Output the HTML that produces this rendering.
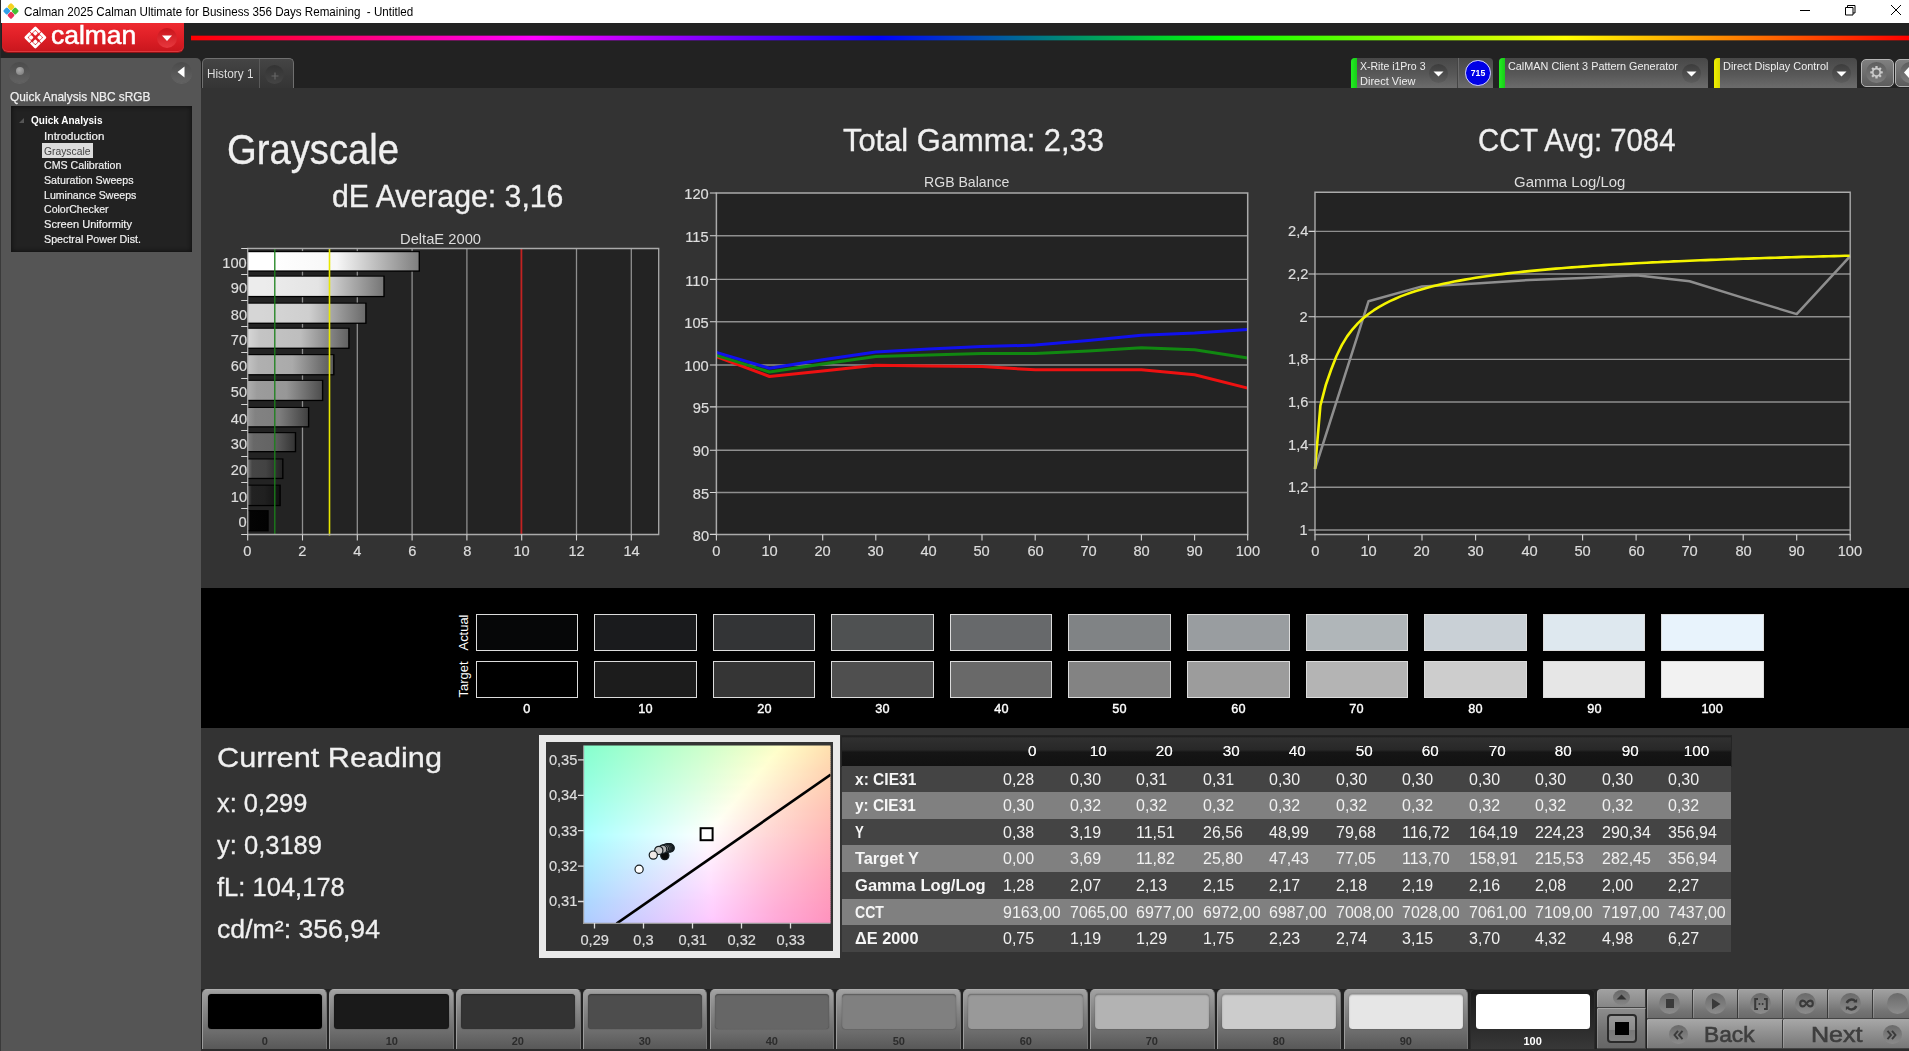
<!DOCTYPE html>
<html lang="en"><head><meta charset="utf-8"><title>Calman 2025 - Grayscale</title>
<style>
html,body{margin:0;padding:0;background:#222;}
body{width:1909px;height:1051px;overflow:hidden;position:relative;font-family:"Liberation Sans",sans-serif;}
#app{position:absolute;left:0;top:0;width:1909px;height:1051px;overflow:hidden;background:#222;}
.b{position:absolute;display:block;}
.t{position:absolute;display:block;white-space:nowrap;margin:0;padding:0;}
</style></head><body><div id="app">
<div class="b" style="left:201.00px;top:88.00px;width:1708.00px;height:901.00px;background:#333;"></div>
<span class="t" style="left:226.50px;top:123.24px;font-size:42.59px;line-height:52px;color:#f0f0f0;transform:scaleX(0.8972);transform-origin:left center;-webkit-text-stroke:0.35px #f0f0f0;">Grayscale</span>
<span class="t" style="left:331.50px;top:178.02px;font-size:31.10px;line-height:38px;color:#f0f0f0;transform:scaleX(0.9723);transform-origin:left center;-webkit-text-stroke:0.35px #f0f0f0;">dE Average: 3,16</span>
<span class="t" style="left:842.50px;top:122.12px;font-size:31.10px;line-height:38px;color:#f0f0f0;transform:scaleX(0.9932);transform-origin:left center;-webkit-text-stroke:0.35px #f0f0f0;">Total Gamma: 2,33</span>
<span class="t" style="left:1477.50px;top:122.12px;font-size:31.10px;line-height:38px;color:#f0f0f0;transform:scaleX(0.9413);transform-origin:left center;-webkit-text-stroke:0.35px #f0f0f0;">CCT Avg: 7084</span>
<span class="t" style="left:400.00px;top:228.76px;font-size:15.41px;line-height:19px;color:#ddd;transform:scaleX(0.9552);transform-origin:left center;">DeltaE 2000</span>
<span class="t" style="left:923.60px;top:172.16px;font-size:15.41px;line-height:19px;color:#ddd;transform:scaleX(0.9149);transform-origin:left center;">RGB Balance</span>
<span class="t" style="left:1513.60px;top:172.16px;font-size:15.41px;line-height:19px;color:#ddd;transform:scaleX(0.9707);transform-origin:left center;">Gamma Log/Log</span>
<svg class="b" style="left:0;top:0" width="1909" height="1051" viewBox="0 0 1909 1051"><defs><linearGradient id="bg0" x1="0" x2="1" y1="0" y2="0"><stop offset="0" stop-color="rgb(255,255,255)"/><stop offset="0.12" stop-color="rgb(255,255,255)"/><stop offset="0.52" stop-color="rgb(247,247,247)"/><stop offset="1" stop-color="rgb(127,127,127)"/></linearGradient><linearGradient id="bg1" x1="0" x2="1" y1="0" y2="0"><stop offset="0" stop-color="rgb(236,236,236)"/><stop offset="0.12" stop-color="rgb(236,236,236)"/><stop offset="0.52" stop-color="rgb(228,228,228)"/><stop offset="1" stop-color="rgb(118,118,118)"/></linearGradient><linearGradient id="bg2" x1="0" x2="1" y1="0" y2="0"><stop offset="0" stop-color="rgb(214,214,214)"/><stop offset="0.12" stop-color="rgb(214,214,214)"/><stop offset="0.52" stop-color="rgb(207,207,207)"/><stop offset="1" stop-color="rgb(107,107,107)"/></linearGradient><linearGradient id="bg3" x1="0" x2="1" y1="0" y2="0"><stop offset="0" stop-color="rgb(214,214,214)"/><stop offset="0.12" stop-color="rgb(196,196,196)"/><stop offset="0.52" stop-color="rgb(190,190,190)"/><stop offset="1" stop-color="rgb(98,98,98)"/></linearGradient><linearGradient id="bg4" x1="0" x2="1" y1="0" y2="0"><stop offset="0" stop-color="rgb(194,194,194)"/><stop offset="0.12" stop-color="rgb(176,176,176)"/><stop offset="0.52" stop-color="rgb(170,170,170)"/><stop offset="1" stop-color="rgb(88,88,88)"/></linearGradient><linearGradient id="bg5" x1="0" x2="1" y1="0" y2="0"><stop offset="0" stop-color="rgb(174,174,174)"/><stop offset="0.12" stop-color="rgb(156,156,156)"/><stop offset="0.52" stop-color="rgb(151,151,151)"/><stop offset="1" stop-color="rgb(78,78,78)"/></linearGradient><linearGradient id="bg6" x1="0" x2="1" y1="0" y2="0"><stop offset="0" stop-color="rgb(148,148,148)"/><stop offset="0.12" stop-color="rgb(130,130,130)"/><stop offset="0.52" stop-color="rgb(126,126,126)"/><stop offset="1" stop-color="rgb(65,65,65)"/></linearGradient><linearGradient id="bg7" x1="0" x2="1" y1="0" y2="0"><stop offset="0" stop-color="rgb(122,122,122)"/><stop offset="0.12" stop-color="rgb(104,104,104)"/><stop offset="0.52" stop-color="rgb(100,100,100)"/><stop offset="1" stop-color="rgb(52,52,52)"/></linearGradient><linearGradient id="bg8" x1="0" x2="1" y1="0" y2="0"><stop offset="0" stop-color="rgb(110,110,110)"/><stop offset="0.12" stop-color="rgb(70,70,70)"/><stop offset="0.52" stop-color="rgb(67,67,67)"/><stop offset="1" stop-color="rgb(35,35,35)"/></linearGradient><linearGradient id="bg9" x1="0" x2="1" y1="0" y2="0"><stop offset="0" stop-color="rgb(74,74,74)"/><stop offset="0.12" stop-color="rgb(34,34,34)"/><stop offset="0.52" stop-color="rgb(32,32,32)"/><stop offset="1" stop-color="rgb(17,17,17)"/></linearGradient><linearGradient id="bg10" x1="0" x2="1" y1="0" y2="0"><stop offset="0" stop-color="rgb(44,44,44)"/><stop offset="0.12" stop-color="rgb(4,4,4)"/><stop offset="0.52" stop-color="rgb(3,3,3)"/><stop offset="1" stop-color="rgb(2,2,2)"/></linearGradient></defs><rect x="247.7" y="248.5" width="411.0" height="286.0" fill="#232323"/><path d="M302.5 248.5V534.5M357.3 248.5V534.5M412.1 248.5V534.5M466.9 248.5V534.5M576.5 248.5V534.5M631.3 248.5V534.5" stroke="#8f8f8f" stroke-width="1.3" fill="none"/><rect x="247.4" y="251.1" width="172.6" height="20.6" fill="#000"/><rect x="248.0" y="252.2" width="170.6" height="18.2" fill="url(#bg0)"/><rect x="247.4" y="275.6" width="137.3" height="21.6" fill="#000"/><rect x="248.0" y="276.7" width="135.3" height="19.2" fill="url(#bg1)"/><rect x="247.4" y="302.6" width="119.2" height="21.3" fill="#000"/><rect x="248.0" y="303.7" width="117.2" height="18.9" fill="url(#bg2)"/><rect x="247.4" y="327.7" width="102.2" height="21.2" fill="#000"/><rect x="248.0" y="328.8" width="100.2" height="18.8" fill="url(#bg3)"/><rect x="247.4" y="354.1" width="87.1" height="21.3" fill="#000"/><rect x="248.0" y="355.2" width="85.1" height="18.9" fill="url(#bg4)"/><rect x="247.4" y="379.8" width="75.9" height="21.3" fill="#000"/><rect x="248.0" y="380.9" width="73.9" height="18.9" fill="url(#bg5)"/><rect x="247.4" y="406.9" width="61.9" height="20.6" fill="#000"/><rect x="248.0" y="408.0" width="59.9" height="18.2" fill="url(#bg6)"/><rect x="247.4" y="432.1" width="48.8" height="20.2" fill="#000"/><rect x="248.0" y="433.2" width="46.8" height="17.8" fill="url(#bg7)"/><rect x="247.4" y="458.4" width="36.1" height="20.7" fill="#000"/><rect x="248.0" y="459.5" width="34.1" height="18.3" fill="url(#bg8)"/><rect x="247.4" y="484.6" width="33.4" height="21.6" fill="#000"/><rect x="248.0" y="485.7" width="31.4" height="19.2" fill="url(#bg9)"/><rect x="247.4" y="510.1" width="21.3" height="21.3" fill="#000"/><rect x="248.0" y="511.2" width="19.3" height="18.9" fill="url(#bg10)"/><path d="M274.8 248.5V534.5" stroke="#1a801a" stroke-width="1.3"/><path d="M329.5 248.5V535.5" stroke="#e8e800" stroke-width="1.6"/><path d="M521.4 248.5V534.5" stroke="#c32222" stroke-width="1.8"/><path d="M247.7 248.5H658.7V534.5H247.7Z" stroke="#aaa" stroke-width="1.3" fill="none"/><path d="M241.2 248.5H247.7M241.2 274.5H247.7M241.2 300.5H247.7M241.2 326.5H247.7M241.2 352.5H247.7M241.2 378.5H247.7M241.2 404.5H247.7M241.2 430.5H247.7M241.2 456.5H247.7M241.2 482.5H247.7M241.2 508.5H247.7M241.2 534.5H247.7M247.7 534.5V540.5M302.5 534.5V540.5M357.3 534.5V540.5M412.1 534.5V540.5M466.9 534.5V540.5M521.7 534.5V540.5M576.5 534.5V540.5M631.3 534.5V540.5" stroke="#d6d6d6" stroke-width="1.1" fill="none"/><rect x="716.4" y="193.0" width="531.3" height="341.4" fill="#232323"/><path d="M716.4 492.5H1247.7M716.4 450.2H1247.7M716.4 406.9H1247.7M716.4 365.0H1247.7M716.4 321.7H1247.7M716.4 279.4H1247.7M716.4 235.7H1247.7" stroke="#8f8f8f" stroke-width="1.4" fill="none"/><polyline points="716.4,356.5 769.5,376.5 822.7,370.9 875.8,365.3 928.9,365.9 982.0,366.6 1035.2,369.8 1088.3,369.8 1141.4,369.8 1194.6,374.7 1247.7,388.1" fill="none" stroke="#ee1111" stroke-width="3" stroke-linejoin="round"/><polyline points="716.4,355.2 769.5,372.0 822.7,364.0 875.8,356.5 928.9,354.9 982.0,353.4 1035.2,353.6 1088.3,351.1 1141.4,347.7 1194.6,349.8 1247.7,358.0" fill="none" stroke="#118811" stroke-width="3" stroke-linejoin="round"/><polyline points="716.4,352.4 769.5,368.3 822.7,359.8 875.8,351.9 928.9,348.9 982.0,346.6 1035.2,345.1 1088.3,340.5 1141.4,335.2 1194.6,333.0 1247.7,329.6" fill="none" stroke="#1111ee" stroke-width="3" stroke-linejoin="round"/><path d="M716.4 193.0H1247.7V534.4H716.4Z" stroke="#aaa" stroke-width="1.5" fill="none"/><path d="M709.9 534.4H716.4M709.9 492.5H716.4M709.9 450.2H716.4M709.9 406.9H716.4M709.9 365.0H716.4M709.9 321.7H716.4M709.9 279.4H716.4M709.9 235.7H716.4M709.9 193.0H716.4M716.4 534.4V540.4M769.5 534.4V540.4M822.7 534.4V540.4M875.8 534.4V540.4M928.9 534.4V540.4M982.0 534.4V540.4M1035.2 534.4V540.4M1088.3 534.4V540.4M1141.4 534.4V540.4M1194.6 534.4V540.4M1247.7 534.4V540.4" stroke="#d6d6d6" stroke-width="1.1" fill="none"/><rect x="1315.0" y="192.3" width="535.2" height="342.2" fill="#232323"/><path d="M1315.0 530.0H1850.2M1315.0 487.3H1850.2M1315.0 444.7H1850.2M1315.0 402.0H1850.2M1315.0 359.4H1850.2M1315.0 316.7H1850.2M1315.0 274.0H1850.2M1315.0 231.4H1850.2" stroke="#8f8f8f" stroke-width="1.4" fill="none"/><polyline points="1315.0,469.0 1368.5,301.3 1422.0,286.4 1475.6,283.6 1529.1,280.0 1582.6,277.9 1636.1,275.3 1689.6,281.3 1743.2,297.9 1796.7,314.1 1850.2,256.1" fill="none" stroke="#8e8e8e" stroke-width="2.5" stroke-linejoin="round"/><polyline points="1315.0,469.0 1320.4,405.6 1325.7,385.3 1331.1,369.7 1336.4,356.2 1341.8,345.1 1347.1,336.4 1352.5,329.3 1357.8,323.4 1363.2,318.3 1368.5,314.0 1373.9,310.2 1379.2,306.8 1384.6,303.8 1389.9,301.1 1395.3,298.7 1400.6,296.4 1406.0,294.4 1411.3,292.5 1416.7,290.8 1422.0,289.2 1427.4,287.7 1432.7,286.3 1438.1,285.0 1443.4,283.8 1448.8,282.7 1454.2,281.6 1459.5,280.6 1464.9,279.6 1470.2,278.7 1475.6,277.8 1480.9,277.0 1486.3,276.2 1491.6,275.5 1497.0,274.8 1502.3,274.1 1507.7,273.4 1513.0,272.8 1518.4,272.2 1523.7,271.6 1529.1,271.1 1534.4,270.6 1539.8,270.1 1545.1,269.6 1550.5,269.1 1555.8,268.6 1561.2,268.2 1566.5,267.8 1571.9,267.4 1577.2,267.0 1582.6,266.6 1588.0,266.2 1593.3,265.8 1598.7,265.5 1604.0,265.1 1609.4,264.8 1614.7,264.5 1620.1,264.2 1625.4,263.9 1630.8,263.6 1636.1,263.3 1641.5,263.0 1646.8,262.7 1652.2,262.4 1657.5,262.2 1662.9,261.9 1668.2,261.7 1673.6,261.4 1678.9,261.2 1684.3,261.0 1689.6,260.7 1695.0,260.5 1700.3,260.3 1705.7,260.1 1711.0,259.9 1716.4,259.7 1721.8,259.5 1727.1,259.3 1732.5,259.1 1737.8,258.9 1743.2,258.7 1748.5,258.6 1753.9,258.4 1759.2,258.2 1764.6,258.0 1769.9,257.9 1775.3,257.7 1780.6,257.6 1786.0,257.4 1791.3,257.2 1796.7,257.1 1802.0,256.9 1807.4,256.8 1812.7,256.7 1818.1,256.5 1823.4,256.4 1828.8,256.2 1834.1,256.1 1839.5,256.0 1844.8,255.8 1850.2,255.7" fill="none" stroke="#f4f400" stroke-width="2.6" stroke-linejoin="round"/><path d="M1315.0 192.3H1850.2V534.5H1315.0Z" stroke="#aaa" stroke-width="1.4" fill="none"/><path d="M1308.5 530.0H1315.0M1308.5 487.3H1315.0M1308.5 444.7H1315.0M1308.5 402.0H1315.0M1308.5 359.4H1315.0M1308.5 316.7H1315.0M1308.5 274.0H1315.0M1308.5 231.4H1315.0M1315.0 534.5V540.5M1368.5 534.5V540.5M1422.0 534.5V540.5M1475.6 534.5V540.5M1529.1 534.5V540.5M1582.6 534.5V540.5M1636.1 534.5V540.5M1689.6 534.5V540.5M1743.2 534.5V540.5M1796.7 534.5V540.5M1850.2 534.5V540.5" stroke="#d6d6d6" stroke-width="1.1" fill="none"/></svg>
<span class="t" style="left:221.09px;top:253.06px;font-size:15.41px;line-height:19px;color:#ddd;transform:scaleX(0.9500);transform-origin:right center;-webkit-text-stroke:0.2px #ddd;">100</span>
<span class="t" style="left:229.66px;top:278.06px;font-size:15.41px;line-height:19px;color:#ddd;transform:scaleX(0.9500);transform-origin:right center;-webkit-text-stroke:0.2px #ddd;">90</span>
<span class="t" style="left:229.66px;top:304.91px;font-size:15.41px;line-height:19px;color:#ddd;transform:scaleX(0.9500);transform-origin:right center;-webkit-text-stroke:0.2px #ddd;">80</span>
<span class="t" style="left:229.66px;top:329.96px;font-size:15.41px;line-height:19px;color:#ddd;transform:scaleX(0.9500);transform-origin:right center;-webkit-text-stroke:0.2px #ddd;">70</span>
<span class="t" style="left:229.66px;top:356.41px;font-size:15.41px;line-height:19px;color:#ddd;transform:scaleX(0.9500);transform-origin:right center;-webkit-text-stroke:0.2px #ddd;">60</span>
<span class="t" style="left:229.66px;top:382.11px;font-size:15.41px;line-height:19px;color:#ddd;transform:scaleX(0.9500);transform-origin:right center;-webkit-text-stroke:0.2px #ddd;">50</span>
<span class="t" style="left:229.66px;top:408.86px;font-size:15.41px;line-height:19px;color:#ddd;transform:scaleX(0.9500);transform-origin:right center;-webkit-text-stroke:0.2px #ddd;">40</span>
<span class="t" style="left:229.66px;top:433.86px;font-size:15.41px;line-height:19px;color:#ddd;transform:scaleX(0.9500);transform-origin:right center;-webkit-text-stroke:0.2px #ddd;">30</span>
<span class="t" style="left:229.66px;top:460.41px;font-size:15.41px;line-height:19px;color:#ddd;transform:scaleX(0.9500);transform-origin:right center;-webkit-text-stroke:0.2px #ddd;">20</span>
<span class="t" style="left:229.66px;top:487.06px;font-size:15.41px;line-height:19px;color:#ddd;transform:scaleX(0.9500);transform-origin:right center;-webkit-text-stroke:0.2px #ddd;">10</span>
<span class="t" style="left:238.23px;top:512.41px;font-size:15.41px;line-height:19px;color:#ddd;transform:scaleX(0.9500);transform-origin:right center;-webkit-text-stroke:0.2px #ddd;">0</span>
<span class="t" style="left:243.42px;top:541.06px;font-size:15.41px;line-height:19px;color:#ddd;transform:scaleX(0.9500);transform-origin:center center;-webkit-text-stroke:0.2px #ddd;">0</span>
<span class="t" style="left:298.22px;top:541.06px;font-size:15.41px;line-height:19px;color:#ddd;transform:scaleX(0.9500);transform-origin:center center;-webkit-text-stroke:0.2px #ddd;">2</span>
<span class="t" style="left:353.02px;top:541.06px;font-size:15.41px;line-height:19px;color:#ddd;transform:scaleX(0.9500);transform-origin:center center;-webkit-text-stroke:0.2px #ddd;">4</span>
<span class="t" style="left:407.82px;top:541.06px;font-size:15.41px;line-height:19px;color:#ddd;transform:scaleX(0.9500);transform-origin:center center;-webkit-text-stroke:0.2px #ddd;">6</span>
<span class="t" style="left:462.62px;top:541.06px;font-size:15.41px;line-height:19px;color:#ddd;transform:scaleX(0.9500);transform-origin:center center;-webkit-text-stroke:0.2px #ddd;">8</span>
<span class="t" style="left:513.13px;top:541.06px;font-size:15.41px;line-height:19px;color:#ddd;transform:scaleX(0.9500);transform-origin:center center;-webkit-text-stroke:0.2px #ddd;">10</span>
<span class="t" style="left:567.93px;top:541.06px;font-size:15.41px;line-height:19px;color:#ddd;transform:scaleX(0.9500);transform-origin:center center;-webkit-text-stroke:0.2px #ddd;">12</span>
<span class="t" style="left:622.73px;top:541.06px;font-size:15.41px;line-height:19px;color:#ddd;transform:scaleX(0.9500);transform-origin:center center;-webkit-text-stroke:0.2px #ddd;">14</span>
<span class="t" style="left:691.86px;top:525.66px;font-size:15.41px;line-height:19px;color:#ddd;transform:scaleX(0.9500);transform-origin:right center;-webkit-text-stroke:0.2px #ddd;">80</span>
<span class="t" style="left:691.86px;top:483.76px;font-size:15.41px;line-height:19px;color:#ddd;transform:scaleX(0.9500);transform-origin:right center;-webkit-text-stroke:0.2px #ddd;">85</span>
<span class="t" style="left:691.86px;top:441.46px;font-size:15.41px;line-height:19px;color:#ddd;transform:scaleX(0.9500);transform-origin:right center;-webkit-text-stroke:0.2px #ddd;">90</span>
<span class="t" style="left:691.86px;top:398.16px;font-size:15.41px;line-height:19px;color:#ddd;transform:scaleX(0.9500);transform-origin:right center;-webkit-text-stroke:0.2px #ddd;">95</span>
<span class="t" style="left:683.29px;top:356.26px;font-size:15.41px;line-height:19px;color:#ddd;transform:scaleX(0.9500);transform-origin:right center;-webkit-text-stroke:0.2px #ddd;">100</span>
<span class="t" style="left:683.29px;top:312.96px;font-size:15.41px;line-height:19px;color:#ddd;transform:scaleX(0.9500);transform-origin:right center;-webkit-text-stroke:0.2px #ddd;">105</span>
<span class="t" style="left:684.44px;top:270.66px;font-size:15.41px;line-height:19px;color:#ddd;transform:scaleX(0.9500);transform-origin:right center;-webkit-text-stroke:0.2px #ddd;">110</span>
<span class="t" style="left:684.44px;top:226.96px;font-size:15.41px;line-height:19px;color:#ddd;transform:scaleX(0.9500);transform-origin:right center;-webkit-text-stroke:0.2px #ddd;">115</span>
<span class="t" style="left:683.29px;top:184.26px;font-size:15.41px;line-height:19px;color:#ddd;transform:scaleX(0.9500);transform-origin:right center;-webkit-text-stroke:0.2px #ddd;">120</span>
<span class="t" style="left:712.12px;top:541.06px;font-size:15.41px;line-height:19px;color:#ddd;transform:scaleX(0.9500);transform-origin:center center;-webkit-text-stroke:0.2px #ddd;">0</span>
<span class="t" style="left:760.96px;top:541.06px;font-size:15.41px;line-height:19px;color:#ddd;transform:scaleX(0.9500);transform-origin:center center;-webkit-text-stroke:0.2px #ddd;">10</span>
<span class="t" style="left:814.09px;top:541.06px;font-size:15.41px;line-height:19px;color:#ddd;transform:scaleX(0.9500);transform-origin:center center;-webkit-text-stroke:0.2px #ddd;">20</span>
<span class="t" style="left:867.22px;top:541.06px;font-size:15.41px;line-height:19px;color:#ddd;transform:scaleX(0.9500);transform-origin:center center;-webkit-text-stroke:0.2px #ddd;">30</span>
<span class="t" style="left:920.35px;top:541.06px;font-size:15.41px;line-height:19px;color:#ddd;transform:scaleX(0.9500);transform-origin:center center;-webkit-text-stroke:0.2px #ddd;">40</span>
<span class="t" style="left:973.48px;top:541.06px;font-size:15.41px;line-height:19px;color:#ddd;transform:scaleX(0.9500);transform-origin:center center;-webkit-text-stroke:0.2px #ddd;">50</span>
<span class="t" style="left:1026.61px;top:541.06px;font-size:15.41px;line-height:19px;color:#ddd;transform:scaleX(0.9500);transform-origin:center center;-webkit-text-stroke:0.2px #ddd;">60</span>
<span class="t" style="left:1079.74px;top:541.06px;font-size:15.41px;line-height:19px;color:#ddd;transform:scaleX(0.9500);transform-origin:center center;-webkit-text-stroke:0.2px #ddd;">70</span>
<span class="t" style="left:1132.87px;top:541.06px;font-size:15.41px;line-height:19px;color:#ddd;transform:scaleX(0.9500);transform-origin:center center;-webkit-text-stroke:0.2px #ddd;">80</span>
<span class="t" style="left:1186.00px;top:541.06px;font-size:15.41px;line-height:19px;color:#ddd;transform:scaleX(0.9500);transform-origin:center center;-webkit-text-stroke:0.2px #ddd;">90</span>
<span class="t" style="left:1234.85px;top:541.06px;font-size:15.41px;line-height:19px;color:#ddd;transform:scaleX(0.9500);transform-origin:center center;-webkit-text-stroke:0.2px #ddd;">100</span>
<span class="t" style="left:1299.43px;top:519.96px;font-size:15.41px;line-height:19px;color:#ddd;transform:scaleX(0.9500);transform-origin:right center;-webkit-text-stroke:0.2px #ddd;">1</span>
<span class="t" style="left:1286.58px;top:477.30px;font-size:15.41px;line-height:19px;color:#ddd;transform:scaleX(0.9500);transform-origin:right center;-webkit-text-stroke:0.2px #ddd;">1,2</span>
<span class="t" style="left:1286.58px;top:434.64px;font-size:15.41px;line-height:19px;color:#ddd;transform:scaleX(0.9500);transform-origin:right center;-webkit-text-stroke:0.2px #ddd;">1,4</span>
<span class="t" style="left:1286.58px;top:391.98px;font-size:15.41px;line-height:19px;color:#ddd;transform:scaleX(0.9500);transform-origin:right center;-webkit-text-stroke:0.2px #ddd;">1,6</span>
<span class="t" style="left:1286.58px;top:349.32px;font-size:15.41px;line-height:19px;color:#ddd;transform:scaleX(0.9500);transform-origin:right center;-webkit-text-stroke:0.2px #ddd;">1,8</span>
<span class="t" style="left:1299.43px;top:306.66px;font-size:15.41px;line-height:19px;color:#ddd;transform:scaleX(0.9500);transform-origin:right center;-webkit-text-stroke:0.2px #ddd;">2</span>
<span class="t" style="left:1286.58px;top:264.00px;font-size:15.41px;line-height:19px;color:#ddd;transform:scaleX(0.9500);transform-origin:right center;-webkit-text-stroke:0.2px #ddd;">2,2</span>
<span class="t" style="left:1286.58px;top:221.34px;font-size:15.41px;line-height:19px;color:#ddd;transform:scaleX(0.9500);transform-origin:right center;-webkit-text-stroke:0.2px #ddd;">2,4</span>
<span class="t" style="left:1310.72px;top:541.06px;font-size:15.41px;line-height:19px;color:#ddd;transform:scaleX(0.9500);transform-origin:center center;-webkit-text-stroke:0.2px #ddd;">0</span>
<span class="t" style="left:1359.95px;top:541.06px;font-size:15.41px;line-height:19px;color:#ddd;transform:scaleX(0.9500);transform-origin:center center;-webkit-text-stroke:0.2px #ddd;">10</span>
<span class="t" style="left:1413.47px;top:541.06px;font-size:15.41px;line-height:19px;color:#ddd;transform:scaleX(0.9500);transform-origin:center center;-webkit-text-stroke:0.2px #ddd;">20</span>
<span class="t" style="left:1466.99px;top:541.06px;font-size:15.41px;line-height:19px;color:#ddd;transform:scaleX(0.9500);transform-origin:center center;-webkit-text-stroke:0.2px #ddd;">30</span>
<span class="t" style="left:1520.51px;top:541.06px;font-size:15.41px;line-height:19px;color:#ddd;transform:scaleX(0.9500);transform-origin:center center;-webkit-text-stroke:0.2px #ddd;">40</span>
<span class="t" style="left:1574.03px;top:541.06px;font-size:15.41px;line-height:19px;color:#ddd;transform:scaleX(0.9500);transform-origin:center center;-webkit-text-stroke:0.2px #ddd;">50</span>
<span class="t" style="left:1627.55px;top:541.06px;font-size:15.41px;line-height:19px;color:#ddd;transform:scaleX(0.9500);transform-origin:center center;-webkit-text-stroke:0.2px #ddd;">60</span>
<span class="t" style="left:1681.07px;top:541.06px;font-size:15.41px;line-height:19px;color:#ddd;transform:scaleX(0.9500);transform-origin:center center;-webkit-text-stroke:0.2px #ddd;">70</span>
<span class="t" style="left:1734.59px;top:541.06px;font-size:15.41px;line-height:19px;color:#ddd;transform:scaleX(0.9500);transform-origin:center center;-webkit-text-stroke:0.2px #ddd;">80</span>
<span class="t" style="left:1788.11px;top:541.06px;font-size:15.41px;line-height:19px;color:#ddd;transform:scaleX(0.9500);transform-origin:center center;-webkit-text-stroke:0.2px #ddd;">90</span>
<span class="t" style="left:1837.35px;top:541.06px;font-size:15.41px;line-height:19px;color:#ddd;transform:scaleX(0.9500);transform-origin:center center;-webkit-text-stroke:0.2px #ddd;">100</span>
<div class="b" style="left:0.00px;top:0.00px;width:1909.00px;height:23.00px;background:#fff;"></div>
<div class="b" style="left:0.00px;top:0.00px;width:1.00px;height:58.00px;background:#2a2a2a;"></div>
<svg class="b" style="left:2px;top:2px" width="18" height="18" viewBox="0 0 20 20"><g transform="rotate(45 10 10)"><rect x="3.6" y="3.6" width="6.2" height="6.2" rx="1.6" fill="#f5d21f"/><rect x="10.2" y="3.6" width="6.2" height="6.2" rx="1.6" fill="#45c236"/><rect x="3.6" y="10.2" width="6.2" height="6.2" rx="1.6" fill="#2f9fe8"/><rect x="10.2" y="10.2" width="6.2" height="6.2" rx="1.6" fill="#e8305a"/></g></svg>
<span class="t" style="left:24.40px;top:5.07px;font-size:12.20px;line-height:15px;color:#000;transform:scaleX(0.9530);transform-origin:left center;">Calman 2025 Calman Ultimate for Business 356 Days Remaining&nbsp; - Untitled</span>
<svg class="b" style="left:1790px;top:0" width="119" height="23" viewBox="0 0 119 23" fill="none" stroke="#000" stroke-width="1"><path d="M10 10.5H20"/><path d="M55.5 7.5h7.500v7.500h-7.500z"/><path d="M57.5 7.5v-2h7.500v7.500h-2"/><path d="M101 5l10 10M111 5l-10 10"/></svg>
<div class="b" style="left:1.5px;top:23px;width:182.5px;height:29.3px;border-radius:0 0 6px 6px;background:linear-gradient(#ee2a30 0%,#e02027 45%,#c8161d 100%);box-shadow:0 1px 0 #8e1216, inset 0 -1px 0 rgba(255,120,120,.35);"></div>
<svg class="b" style="left:20px;top:24px" width="32" height="28" viewBox="0 0 32 28"><g transform="translate(15.35 13.5) rotate(45)" fill="none" stroke="#fff" stroke-width="2.7" stroke-linejoin="round"><path d="M-6.75 -0.45V-6.75H-0.45"/><path d="M-6.75 0.45V6.75H-0.45"/><path d="M6.75 -0.45V-6.75H0.45"/><path d="M6.75 0.45V6.75H0.45"/></g><g transform="translate(15.35 13.5) rotate(45)" fill="#fff"><rect x="-4.9" y="-4.9" width="3.7" height="3.7" rx=".9"/><rect x="1.2" y="-4.9" width="3.7" height="3.7" rx=".9"/><rect x="-4.9" y="1.2" width="3.7" height="3.7" rx=".9"/><rect x="1.2" y="1.2" width="3.7" height="3.7" rx=".9"/></g></svg>
<span class="t" style="left:50.70px;top:19.70px;font-size:25.40px;line-height:31px;color:#fff;transform:scaleX(1.0417);transform-origin:left center;-webkit-text-stroke:0.55px #fff;">calman</span>
<div class="b" style="left:157px;top:28px;width:20px;height:20px;border-radius:50%;background:linear-gradient(#c9141b,#e8383e);"></div>
<svg class="b" style="left:161px;top:35px" width="12" height="7"><path d="M1 0.5h10L6 6z" fill="#fff"/></svg>
<div class="b" style="left:191px;top:35px;width:1718px;height:6px;background:linear-gradient(to right,#ff0000 0%,#ff00ff 20%,#0000ff 40%,#00ff00 60%,#ffff00 80%,#ff0000 100%);-webkit-mask-image:linear-gradient(to bottom,transparent 0,#000 25%,#000 75%,transparent 100%);mask-image:linear-gradient(to bottom,transparent 0,#000 25%,#000 75%,transparent 100%);"></div>
<div class="b" style="left:0.00px;top:58.00px;width:201.20px;height:993.00px;background:#555;border-radius:0 5px 0 0;border-left:1px solid #3a3a3a;box-sizing:border-box;"></div>
<div class="b" style="left:9.0px;top:62px;width:21px;height:21px;border-radius:50%;background:linear-gradient(#4b4b4b,#626262);box-shadow:0 1px 0 rgba(255,255,255,.08);"></div>
<div class="b" style="left:171.0px;top:62px;width:21px;height:21px;border-radius:50%;background:linear-gradient(#4b4b4b,#626262);box-shadow:0 1px 0 rgba(255,255,255,.08);"></div>
<div class="b" style="left:15.5px;top:67px;width:8px;height:8px;border-radius:50%;background:radial-gradient(circle at 40% 35%,#aaa,#777);"></div>
<svg class="b" style="left:176px;top:66px" width="10" height="13"><path d="M8.5 0.5v11L1.5 6z" fill="#fff"/></svg>
<span class="t" style="left:10.40px;top:88.69px;font-size:13.30px;line-height:16px;color:#eee;transform:scaleX(0.8925);transform-origin:left center;-webkit-text-stroke:0.25px #eee;">Quick Analysis NBC sRGB</span>
<div class="b" style="left:11.00px;top:105.50px;width:181.00px;height:146.00px;background:#222;box-shadow:inset 0 0 4px 1px #111;"></div>
<svg class="b" style="left:18px;top:117px" width="7" height="7"><path d="M6 1v5H1z" fill="#555"/></svg>
<span class="t" style="left:31.40px;top:113.18px;font-size:11.60px;line-height:14px;color:#fff;transform:scaleX(0.8641);transform-origin:left center;font-weight:bold;">Quick Analysis</span>
<span class="t" style="left:44.00px;top:129.18px;font-size:11.60px;line-height:14px;color:#f2f2f2;transform:scaleX(0.9964);transform-origin:left center;-webkit-text-stroke:0.2px #f2f2f2;">Introduction</span>
<div class="b" style="left:42.00px;top:143.30px;width:50.50px;height:14.30px;background:#dcdcdc;"></div>
<span class="t" style="left:44.00px;top:143.81px;font-size:11.60px;line-height:14px;color:#444;transform:scaleX(0.8905);transform-origin:left center;">Grayscale</span>
<span class="t" style="left:44.00px;top:158.44px;font-size:11.60px;line-height:14px;color:#f2f2f2;transform:scaleX(0.9165);transform-origin:left center;-webkit-text-stroke:0.2px #f2f2f2;">CMS Calibration</span>
<span class="t" style="left:44.00px;top:173.07px;font-size:11.60px;line-height:14px;color:#f2f2f2;transform:scaleX(0.9202);transform-origin:left center;-webkit-text-stroke:0.2px #f2f2f2;">Saturation Sweeps</span>
<span class="t" style="left:44.00px;top:187.70px;font-size:11.60px;line-height:14px;color:#f2f2f2;transform:scaleX(0.9127);transform-origin:left center;-webkit-text-stroke:0.2px #f2f2f2;">Luminance Sweeps</span>
<span class="t" style="left:44.00px;top:202.33px;font-size:11.60px;line-height:14px;color:#f2f2f2;transform:scaleX(0.9109);transform-origin:left center;-webkit-text-stroke:0.2px #f2f2f2;">ColorChecker</span>
<span class="t" style="left:44.00px;top:216.96px;font-size:11.60px;line-height:14px;color:#f2f2f2;transform:scaleX(0.9546);transform-origin:left center;-webkit-text-stroke:0.2px #f2f2f2;">Screen Uniformity</span>
<span class="t" style="left:44.00px;top:231.59px;font-size:11.60px;line-height:14px;color:#f2f2f2;transform:scaleX(0.9231);transform-origin:left center;-webkit-text-stroke:0.2px #f2f2f2;">Spectral Power Dist.</span>
<div class="b" style="left:201.5px;top:58px;width:92px;height:30px;border-radius:5px 5px 0 0;background:linear-gradient(#454545,#3a3a3a 60%,#353535);border:1.2px solid #707070;border-bottom:none;box-sizing:border-box;"></div>
<div class="b" style="left:259.00px;top:59.00px;width:1.00px;height:29.00px;background:#5a5a5a;"></div>
<span class="t" style="left:206.80px;top:65.93px;font-size:12.60px;line-height:16px;color:#ddd;transform:scaleX(0.9354);transform-origin:left center;">History 1</span>
<div class="b" style="left:265px;top:65px;width:19px;height:19px;border-radius:50%;background:linear-gradient(#333,#444);"></div>
<svg class="b" style="left:270.5px;top:71.5px" width="8" height="8"><path d="M4 0.5v7M0.5 4h7" stroke="#666" stroke-width="1.2"/></svg>
<div class="b" style="left:1350.5px;top:58px;width:142.5px;height:30px;border-radius:4px 4px 0 0;background:linear-gradient(#484848,#585858 55%,#6c6c6c);"></div>
<div class="b" style="left:1350.5px;top:58px;width:6px;height:30px;border-radius:4px 0 0 0;background:linear-gradient(to right,#22ee22,#18cc18);"></div>
<span class="t" style="left:1359.50px;top:59.08px;font-size:11.30px;line-height:14px;color:#eee;transform:scaleX(0.9312);transform-origin:left center;">X-Rite i1Pro 3</span>
<span class="t" style="left:1359.50px;top:74.08px;font-size:11.30px;line-height:14px;color:#eee;transform:scaleX(0.9747);transform-origin:left center;">Direct View</span>
<div class="b" style="left:1428.5px;top:63.5px;width:19px;height:19px;border-radius:50%;background:linear-gradient(#3c3c3c,#5c5c5c);"></div>
<svg class="b" style="left:1432.5px;top:70.5px" width="11" height="6"><path d="M0.5 0.5h10L5.5 5.5z" fill="#fff"/></svg>
<div class="b" style="left:1457.00px;top:58.00px;width:1.00px;height:30.00px;background:#444;"></div>
<div class="b" style="left:1458.00px;top:58.00px;width:1.00px;height:30.00px;background:#6a6a6a;"></div>
<div class="b" style="left:1465.2px;top:60.3px;width:25.6px;height:25.6px;border-radius:50%;background:#0000e6;border:1.2px solid #d8d8ff;box-sizing:border-box;"></div>
<span class="t" style="left:1469.99px;top:67.27px;font-size:9.60px;line-height:12px;color:#fff;transform:scaleX(0.9052);transform-origin:center center;font-weight:bold;">715</span>
<div class="b" style="left:1499.0px;top:58px;width:208.5px;height:30px;border-radius:4px 4px 0 0;background:linear-gradient(#484848,#585858 55%,#6c6c6c);"></div>
<div class="b" style="left:1499.0px;top:58px;width:6px;height:30px;border-radius:4px 0 0 0;background:linear-gradient(to right,#22ee22,#18cc18);"></div>
<span class="t" style="left:1508.00px;top:59.08px;font-size:11.30px;line-height:14px;color:#eee;transform:scaleX(0.9598);transform-origin:left center;">CalMAN Client 3 Pattern Generator</span>
<div class="b" style="left:1682.0px;top:63.5px;width:19px;height:19px;border-radius:50%;background:linear-gradient(#3c3c3c,#5c5c5c);"></div>
<svg class="b" style="left:1686.0px;top:70.5px" width="11" height="6"><path d="M0.5 0.5h10L5.5 5.5z" fill="#fff"/></svg>
<div class="b" style="left:1713.5px;top:58px;width:143.0px;height:30px;border-radius:4px 4px 0 0;background:linear-gradient(#484848,#585858 55%,#6c6c6c);"></div>
<div class="b" style="left:1713.5px;top:58px;width:6px;height:30px;border-radius:4px 0 0 0;background:linear-gradient(to right,#f0f000,#d8d800);"></div>
<span class="t" style="left:1722.50px;top:59.08px;font-size:11.30px;line-height:14px;color:#eee;transform:scaleX(0.9655);transform-origin:left center;">Direct Display Control</span>
<div class="b" style="left:1831.5px;top:63.5px;width:19px;height:19px;border-radius:50%;background:linear-gradient(#3c3c3c,#5c5c5c);"></div>
<svg class="b" style="left:1835.5px;top:70.5px" width="11" height="6"><path d="M0.5 0.5h10L5.5 5.5z" fill="#fff"/></svg>
<div class="b" style="left:1860.5px;top:58.5px;width:33px;height:28px;border-radius:5px;background:linear-gradient(#808080,#5c5c5c);border:1px solid #b4b4b4;box-sizing:border-box;"></div>
<div class="b" style="left:1866px;top:62px;width:21px;height:21px;border-radius:50%;background:linear-gradient(#5e5e5e,#7c7c7c);"></div>
<svg class="b" style="left:1866px;top:62px" width="21" height="21" viewBox="-12.6 -12.4 25.2 25.2"><g fill="#cacaca"><rect x="-1.4" y="-7.5" width="2.800" height="3" rx=".5" transform="rotate(0)"/><rect x="-1.4" y="-7.5" width="2.800" height="3" rx=".5" transform="rotate(45)"/><rect x="-1.4" y="-7.5" width="2.800" height="3" rx=".5" transform="rotate(90)"/><rect x="-1.4" y="-7.5" width="2.800" height="3" rx=".5" transform="rotate(135)"/><rect x="-1.4" y="-7.5" width="2.800" height="3" rx=".5" transform="rotate(180)"/><rect x="-1.4" y="-7.5" width="2.800" height="3" rx=".5" transform="rotate(225)"/><rect x="-1.4" y="-7.5" width="2.800" height="3" rx=".5" transform="rotate(270)"/><rect x="-1.4" y="-7.5" width="2.800" height="3" rx=".5" transform="rotate(315)"/></g><circle r="4.5" fill="none" stroke="#cacaca" stroke-width="2"/></svg>
<div class="b" style="left:1895px;top:58.5px;width:33px;height:28px;border-radius:5px;background:linear-gradient(#808080,#5c5c5c);border:1px solid #b4b4b4;box-sizing:border-box;"></div>
<div class="b" style="left:1900px;top:62px;width:21px;height:21px;border-radius:50%;background:linear-gradient(#5e5e5e,#7c7c7c);"></div>
<svg class="b" style="left:1904px;top:67px" width="6" height="12"><path d="M5 0v11L0 5.5z" fill="#fff"/></svg>
<div class="b" style="left:201.30px;top:588.00px;width:1708.00px;height:140.00px;background:#000;"></div>
<div class="b" style="left:475.60px;top:614.00px;width:102.60px;height:37.40px;background:#060708;border:1.5px solid #dcdcdc;box-sizing:border-box;"></div>
<div class="b" style="left:475.60px;top:661.00px;width:102.60px;height:37.40px;background:#000000;border:1.5px solid #dcdcdc;box-sizing:border-box;"></div>
<span class="t" style="left:523.18px;top:700.47px;font-size:13.37px;line-height:17px;color:#fff;transform:scaleX(0.9500);transform-origin:center center;-webkit-text-stroke:0.4px #fff;">0</span>
<div class="b" style="left:594.16px;top:614.00px;width:102.60px;height:37.40px;background:#1a1b1d;border:1.5px solid #dcdcdc;box-sizing:border-box;"></div>
<div class="b" style="left:594.16px;top:661.00px;width:102.60px;height:37.40px;background:#1c1c1c;border:1.5px solid #dcdcdc;box-sizing:border-box;"></div>
<span class="t" style="left:638.02px;top:700.47px;font-size:13.37px;line-height:17px;color:#fff;transform:scaleX(0.9500);transform-origin:center center;-webkit-text-stroke:0.4px #fff;">10</span>
<div class="b" style="left:712.72px;top:614.00px;width:102.60px;height:37.40px;background:#333436;border:1.5px solid #dcdcdc;box-sizing:border-box;"></div>
<div class="b" style="left:712.72px;top:661.00px;width:102.60px;height:37.40px;background:#353535;border:1.5px solid #dcdcdc;box-sizing:border-box;"></div>
<span class="t" style="left:756.58px;top:700.47px;font-size:13.37px;line-height:17px;color:#fff;transform:scaleX(0.9500);transform-origin:center center;-webkit-text-stroke:0.4px #fff;">20</span>
<div class="b" style="left:831.28px;top:614.00px;width:102.60px;height:37.40px;background:#4f5152;border:1.5px solid #dcdcdc;box-sizing:border-box;"></div>
<div class="b" style="left:831.28px;top:661.00px;width:102.60px;height:37.40px;background:#4f4f4f;border:1.5px solid #dcdcdc;box-sizing:border-box;"></div>
<span class="t" style="left:875.14px;top:700.47px;font-size:13.37px;line-height:17px;color:#fff;transform:scaleX(0.9500);transform-origin:center center;-webkit-text-stroke:0.4px #fff;">30</span>
<div class="b" style="left:949.84px;top:614.00px;width:102.60px;height:37.40px;background:#67696b;border:1.5px solid #dcdcdc;box-sizing:border-box;"></div>
<div class="b" style="left:949.84px;top:661.00px;width:102.60px;height:37.40px;background:#696969;border:1.5px solid #dcdcdc;box-sizing:border-box;"></div>
<span class="t" style="left:993.70px;top:700.47px;font-size:13.37px;line-height:17px;color:#fff;transform:scaleX(0.9500);transform-origin:center center;-webkit-text-stroke:0.4px #fff;">40</span>
<div class="b" style="left:1068.40px;top:614.00px;width:102.60px;height:37.40px;background:#808385;border:1.5px solid #dcdcdc;box-sizing:border-box;"></div>
<div class="b" style="left:1068.40px;top:661.00px;width:102.60px;height:37.40px;background:#838383;border:1.5px solid #dcdcdc;box-sizing:border-box;"></div>
<span class="t" style="left:1112.26px;top:700.47px;font-size:13.37px;line-height:17px;color:#fff;transform:scaleX(0.9500);transform-origin:center center;-webkit-text-stroke:0.4px #fff;">50</span>
<div class="b" style="left:1186.96px;top:614.00px;width:102.60px;height:37.40px;background:#999da0;border:1.5px solid #dcdcdc;box-sizing:border-box;"></div>
<div class="b" style="left:1186.96px;top:661.00px;width:102.60px;height:37.40px;background:#9c9c9c;border:1.5px solid #dcdcdc;box-sizing:border-box;"></div>
<span class="t" style="left:1230.82px;top:700.47px;font-size:13.37px;line-height:17px;color:#fff;transform:scaleX(0.9500);transform-origin:center center;-webkit-text-stroke:0.4px #fff;">60</span>
<div class="b" style="left:1305.52px;top:614.00px;width:102.60px;height:37.40px;background:#b0b6b9;border:1.5px solid #dcdcdc;box-sizing:border-box;"></div>
<div class="b" style="left:1305.52px;top:661.00px;width:102.60px;height:37.40px;background:#b4b4b4;border:1.5px solid #dcdcdc;box-sizing:border-box;"></div>
<span class="t" style="left:1349.38px;top:700.47px;font-size:13.37px;line-height:17px;color:#fff;transform:scaleX(0.9500);transform-origin:center center;-webkit-text-stroke:0.4px #fff;">70</span>
<div class="b" style="left:1424.08px;top:614.00px;width:102.60px;height:37.40px;background:#c9d0d6;border:1.5px solid #dcdcdc;box-sizing:border-box;"></div>
<div class="b" style="left:1424.08px;top:661.00px;width:102.60px;height:37.40px;background:#cdcdcd;border:1.5px solid #dcdcdc;box-sizing:border-box;"></div>
<span class="t" style="left:1467.94px;top:700.47px;font-size:13.37px;line-height:17px;color:#fff;transform:scaleX(0.9500);transform-origin:center center;-webkit-text-stroke:0.4px #fff;">80</span>
<div class="b" style="left:1542.64px;top:614.00px;width:102.60px;height:37.40px;background:#dee8ef;border:1.5px solid #dcdcdc;box-sizing:border-box;"></div>
<div class="b" style="left:1542.64px;top:661.00px;width:102.60px;height:37.40px;background:#e6e6e6;border:1.5px solid #dcdcdc;box-sizing:border-box;"></div>
<span class="t" style="left:1586.50px;top:700.47px;font-size:13.37px;line-height:17px;color:#fff;transform:scaleX(0.9500);transform-origin:center center;-webkit-text-stroke:0.4px #fff;">90</span>
<div class="b" style="left:1661.20px;top:614.00px;width:102.60px;height:37.40px;background:#e8f3fc;border:1.5px solid #dcdcdc;box-sizing:border-box;"></div>
<div class="b" style="left:1661.20px;top:661.00px;width:102.60px;height:37.40px;background:#f2f2f2;border:1.5px solid #dcdcdc;box-sizing:border-box;"></div>
<span class="t" style="left:1701.34px;top:700.47px;font-size:13.37px;line-height:17px;color:#fff;transform:scaleX(0.9500);transform-origin:center center;-webkit-text-stroke:0.4px #fff;">100</span>
<span class="t" style="left:446.63px;top:624.67px;font-size:12.50px;line-height:15px;color:#fff;transform:rotate(-90deg) scaleX(1.0362);transform-origin:center center;">Actual</span>
<span class="t" style="left:446.63px;top:671.67px;font-size:12.50px;line-height:15px;color:#fff;transform:rotate(-90deg) scaleX(1.0362);transform-origin:center center;">Target</span>
<span class="t" style="left:217.00px;top:740.23px;font-size:28.49px;line-height:35px;color:#f0f0f0;transform:scaleX(1.0764);transform-origin:left center;-webkit-text-stroke:0.3px #f0f0f0;">Current Reading</span>
<span class="t" style="left:217.00px;top:788.04px;font-size:25.58px;line-height:31px;color:#f0f0f0;transform:scaleX(0.9921);transform-origin:left center;-webkit-text-stroke:0.3px #f0f0f0;">x: 0,299</span>
<span class="t" style="left:217.00px;top:829.94px;font-size:25.58px;line-height:31px;color:#f0f0f0;transform:scaleX(0.9976);transform-origin:left center;-webkit-text-stroke:0.3px #f0f0f0;">y: 0,3189</span>
<span class="t" style="left:217.00px;top:872.24px;font-size:25.58px;line-height:31px;color:#f0f0f0;transform:scaleX(0.9983);transform-origin:left center;-webkit-text-stroke:0.3px #f0f0f0;">fL: 104,178</span>
<span class="t" style="left:217.00px;top:914.14px;font-size:25.58px;line-height:31px;color:#f0f0f0;transform:scaleX(1.0421);transform-origin:left center;-webkit-text-stroke:0.3px #f0f0f0;">cd/m²: 356,94</span>
<div class="b" style="left:538.50px;top:734.50px;width:301.50px;height:223.00px;background:#333;border:7px solid #e9e9e9;box-sizing:border-box;"></div>
<svg class="b" style="left:0;top:0" width="1909" height="1051" viewBox="0 0 1909 1051"><defs><clipPath id="cp"><rect x="583.9" y="745.5" width="246.6" height="177.5"/></clipPath></defs><defs><linearGradient id="c0"><stop offset="0" stop-color="#86ffce"/><stop offset="0.496" stop-color="#ceffca"/><stop offset="0.797" stop-color="#ffffc8"/><stop offset="1" stop-color="#ffe0ae"/></linearGradient><linearGradient id="c1"><stop offset="0" stop-color="#86ffcf"/><stop offset="0.496" stop-color="#cfffcc"/><stop offset="0.789" stop-color="#ffffca"/><stop offset="1" stop-color="#ffdfaf"/></linearGradient><linearGradient id="c2"><stop offset="0" stop-color="#87ffd0"/><stop offset="0.496" stop-color="#d0ffcd"/><stop offset="0.789" stop-color="#fffeca"/><stop offset="1" stop-color="#ffdeaf"/></linearGradient><linearGradient id="c3"><stop offset="0" stop-color="#88ffd1"/><stop offset="0.488" stop-color="#d0ffce"/><stop offset="0.78" stop-color="#fffecb"/><stop offset="1" stop-color="#ffddaf"/></linearGradient><linearGradient id="c4"><stop offset="0" stop-color="#89ffd2"/><stop offset="0.488" stop-color="#d1ffcf"/><stop offset="0.772" stop-color="#fffecc"/><stop offset="1" stop-color="#ffdcaf"/></linearGradient><linearGradient id="c5"><stop offset="0" stop-color="#89ffd3"/><stop offset="0.488" stop-color="#d2ffd0"/><stop offset="0.764" stop-color="#ffffce"/><stop offset="1" stop-color="#ffdbaf"/></linearGradient><linearGradient id="c6"><stop offset="0" stop-color="#8affd4"/><stop offset="0.488" stop-color="#d3ffd1"/><stop offset="0.756" stop-color="#ffffcf"/><stop offset="1" stop-color="#ffdab0"/></linearGradient><linearGradient id="c7"><stop offset="0" stop-color="#8bffd5"/><stop offset="0.488" stop-color="#d4ffd2"/><stop offset="0.748" stop-color="#ffffd0"/><stop offset="1" stop-color="#ffd9b0"/></linearGradient><linearGradient id="c8"><stop offset="0" stop-color="#8cffd6"/><stop offset="0.488" stop-color="#d5ffd3"/><stop offset="0.748" stop-color="#fffed1"/><stop offset="1" stop-color="#ffd8b0"/></linearGradient><linearGradient id="c9"><stop offset="0" stop-color="#8cffd7"/><stop offset="0.48" stop-color="#d5ffd4"/><stop offset="0.74" stop-color="#fffed2"/><stop offset="0.992" stop-color="#ffd8b1"/><stop offset="1" stop-color="#ffd7b0"/></linearGradient><linearGradient id="c10"><stop offset="0" stop-color="#8dffd8"/><stop offset="0.48" stop-color="#d6ffd5"/><stop offset="0.732" stop-color="#fffed3"/><stop offset="0.976" stop-color="#ffd9b3"/><stop offset="1" stop-color="#ffd6b0"/></linearGradient><linearGradient id="c11"><stop offset="0" stop-color="#8effd9"/><stop offset="0.48" stop-color="#d7ffd6"/><stop offset="0.724" stop-color="#ffffd5"/><stop offset="0.967" stop-color="#ffd9b4"/><stop offset="1" stop-color="#ffd5b1"/></linearGradient><linearGradient id="c12"><stop offset="0" stop-color="#8fffda"/><stop offset="0.48" stop-color="#d8ffd8"/><stop offset="0.715" stop-color="#ffffd6"/><stop offset="0.959" stop-color="#ffd9b5"/><stop offset="1" stop-color="#ffd4b1"/></linearGradient><linearGradient id="c13"><stop offset="0" stop-color="#8fffdb"/><stop offset="0.48" stop-color="#d9ffd9"/><stop offset="0.707" stop-color="#ffffd7"/><stop offset="0.951" stop-color="#ffd9b7"/><stop offset="1" stop-color="#ffd3b1"/></linearGradient><linearGradient id="c14"><stop offset="0" stop-color="#90ffdc"/><stop offset="0.472" stop-color="#d8ffda"/><stop offset="0.707" stop-color="#fffed8"/><stop offset="0.951" stop-color="#ffd9b7"/><stop offset="1" stop-color="#ffd2b1"/></linearGradient><linearGradient id="c15"><stop offset="0" stop-color="#91ffdd"/><stop offset="0.472" stop-color="#d9ffdb"/><stop offset="0.699" stop-color="#fffed9"/><stop offset="0.943" stop-color="#ffd9b8"/><stop offset="1" stop-color="#ffd1b1"/></linearGradient><linearGradient id="c16"><stop offset="0" stop-color="#92ffde"/><stop offset="0.472" stop-color="#daffdc"/><stop offset="0.691" stop-color="#fffeda"/><stop offset="0.935" stop-color="#ffd9b9"/><stop offset="1" stop-color="#ffd0b2"/></linearGradient><linearGradient id="c17"><stop offset="0" stop-color="#93ffdf"/><stop offset="0.472" stop-color="#dcffdd"/><stop offset="0.683" stop-color="#ffffdc"/><stop offset="0.927" stop-color="#ffd9ba"/><stop offset="1" stop-color="#ffcfb2"/></linearGradient><linearGradient id="c18"><stop offset="0" stop-color="#93ffe0"/><stop offset="0.472" stop-color="#ddffde"/><stop offset="0.675" stop-color="#ffffdd"/><stop offset="0.919" stop-color="#ffd9bb"/><stop offset="1" stop-color="#ffceb2"/></linearGradient><linearGradient id="c19"><stop offset="0" stop-color="#94ffe1"/><stop offset="0.472" stop-color="#deffe0"/><stop offset="0.667" stop-color="#ffffdf"/><stop offset="0.911" stop-color="#ffd9bd"/><stop offset="1" stop-color="#ffcdb2"/></linearGradient><linearGradient id="c20"><stop offset="0" stop-color="#95ffe2"/><stop offset="0.463" stop-color="#ddffe1"/><stop offset="0.667" stop-color="#fffedf"/><stop offset="0.911" stop-color="#ffd8bd"/><stop offset="1" stop-color="#ffccb2"/></linearGradient><linearGradient id="c21"><stop offset="0" stop-color="#96ffe4"/><stop offset="0.463" stop-color="#deffe2"/><stop offset="0.659" stop-color="#fffee0"/><stop offset="0.902" stop-color="#ffd8be"/><stop offset="1" stop-color="#ffcbb2"/></linearGradient><linearGradient id="c22"><stop offset="0" stop-color="#97ffe5"/><stop offset="0.463" stop-color="#dfffe3"/><stop offset="0.65" stop-color="#fffee2"/><stop offset="0.894" stop-color="#ffd8bf"/><stop offset="1" stop-color="#ffcbb3"/></linearGradient><linearGradient id="c23"><stop offset="0" stop-color="#97ffe6"/><stop offset="0.463" stop-color="#e1ffe4"/><stop offset="0.642" stop-color="#fffee3"/><stop offset="0.886" stop-color="#ffd8c0"/><stop offset="1" stop-color="#ffcab3"/></linearGradient><linearGradient id="c24"><stop offset="0" stop-color="#98ffe7"/><stop offset="0.463" stop-color="#e2ffe5"/><stop offset="0.634" stop-color="#ffffe5"/><stop offset="0.878" stop-color="#ffd9c2"/><stop offset="1" stop-color="#ffc9b3"/></linearGradient><linearGradient id="c25"><stop offset="0" stop-color="#99ffe8"/><stop offset="0.463" stop-color="#e3ffe7"/><stop offset="0.626" stop-color="#ffffe6"/><stop offset="0.862" stop-color="#ffdac4"/><stop offset="1" stop-color="#ffc8b3"/></linearGradient><linearGradient id="c26"><stop offset="0" stop-color="#9affe9"/><stop offset="0.455" stop-color="#e2ffe8"/><stop offset="0.626" stop-color="#fffee6"/><stop offset="0.87" stop-color="#ffd8c3"/><stop offset="1" stop-color="#ffc7b3"/></linearGradient><linearGradient id="c27"><stop offset="0" stop-color="#9bffea"/><stop offset="0.455" stop-color="#e4ffe9"/><stop offset="0.618" stop-color="#fffee8"/><stop offset="0.854" stop-color="#ffd9c5"/><stop offset="1" stop-color="#ffc6b4"/></linearGradient><linearGradient id="c28"><stop offset="0" stop-color="#9cffeb"/><stop offset="0.455" stop-color="#e5ffea"/><stop offset="0.61" stop-color="#fffee9"/><stop offset="0.846" stop-color="#ffd9c6"/><stop offset="1" stop-color="#ffc5b4"/></linearGradient><linearGradient id="c29"><stop offset="0" stop-color="#9cffed"/><stop offset="0.455" stop-color="#e6ffec"/><stop offset="0.602" stop-color="#fffeeb"/><stop offset="0.837" stop-color="#ffd9c8"/><stop offset="1" stop-color="#ffc4b4"/></linearGradient><linearGradient id="c30"><stop offset="0" stop-color="#9dffee"/><stop offset="0.455" stop-color="#e7ffed"/><stop offset="0.593" stop-color="#ffffec"/><stop offset="0.829" stop-color="#ffd9c9"/><stop offset="1" stop-color="#ffc3b4"/></linearGradient><linearGradient id="c31"><stop offset="0" stop-color="#9effef"/><stop offset="0.447" stop-color="#e7ffee"/><stop offset="0.585" stop-color="#ffffee"/><stop offset="0.821" stop-color="#ffd9ca"/><stop offset="1" stop-color="#ffc2b4"/></linearGradient><linearGradient id="c32"><stop offset="0" stop-color="#9ffff0"/><stop offset="0.447" stop-color="#e8ffef"/><stop offset="0.585" stop-color="#fffeee"/><stop offset="0.821" stop-color="#ffd8ca"/><stop offset="1" stop-color="#ffc1b4"/></linearGradient><linearGradient id="c33"><stop offset="0" stop-color="#a0fff1"/><stop offset="0.447" stop-color="#e9fff1"/><stop offset="0.577" stop-color="#fffeef"/><stop offset="0.813" stop-color="#ffd8cc"/><stop offset="1" stop-color="#ffc0b5"/></linearGradient><linearGradient id="c34"><stop offset="0" stop-color="#a1fff2"/><stop offset="0.447" stop-color="#eafff2"/><stop offset="0.569" stop-color="#fffef1"/><stop offset="0.805" stop-color="#ffd9cd"/><stop offset="1" stop-color="#ffc0b5"/></linearGradient><linearGradient id="c35"><stop offset="0" stop-color="#a1fff4"/><stop offset="0.447" stop-color="#ebfff3"/><stop offset="0.561" stop-color="#fffef2"/><stop offset="0.797" stop-color="#ffd9ce"/><stop offset="1" stop-color="#ffbfb5"/></linearGradient><linearGradient id="c36"><stop offset="0" stop-color="#a2fff5"/><stop offset="0.447" stop-color="#ecfff4"/><stop offset="0.553" stop-color="#fffff4"/><stop offset="0.789" stop-color="#ffd9cf"/><stop offset="1" stop-color="#ffbeb5"/></linearGradient><linearGradient id="c37"><stop offset="0" stop-color="#a3fff6"/><stop offset="0.439" stop-color="#ecfff6"/><stop offset="0.545" stop-color="#fffff5"/><stop offset="0.78" stop-color="#ffd9d1"/><stop offset="1" stop-color="#ffbdb5"/></linearGradient><linearGradient id="c38"><stop offset="0" stop-color="#a4fff7"/><stop offset="0.439" stop-color="#edfff7"/><stop offset="0.537" stop-color="#fffff7"/><stop offset="0.78" stop-color="#ffd8d1"/><stop offset="1" stop-color="#ffbcb6"/></linearGradient><linearGradient id="c39"><stop offset="0" stop-color="#a5fff8"/><stop offset="0.439" stop-color="#eefff8"/><stop offset="0.537" stop-color="#fffef7"/><stop offset="0.772" stop-color="#ffd8d2"/><stop offset="1" stop-color="#ffbbb6"/></linearGradient><linearGradient id="c40"><stop offset="0" stop-color="#a6fffa"/><stop offset="0.439" stop-color="#f0fffa"/><stop offset="0.528" stop-color="#fffef9"/><stop offset="0.764" stop-color="#ffd8d3"/><stop offset="1" stop-color="#ffbab6"/></linearGradient><linearGradient id="c41"><stop offset="0" stop-color="#a7fffb"/><stop offset="0.439" stop-color="#f1fffb"/><stop offset="0.52" stop-color="#fffefa"/><stop offset="0.756" stop-color="#ffd8d5"/><stop offset="1" stop-color="#ffb9b6"/></linearGradient><linearGradient id="c42"><stop offset="0" stop-color="#a8fffc"/><stop offset="0.431" stop-color="#f1fffc"/><stop offset="0.512" stop-color="#fffffc"/><stop offset="0.74" stop-color="#ffdad7"/><stop offset="1" stop-color="#ffb8b6"/></linearGradient><linearGradient id="c43"><stop offset="0" stop-color="#a9fffd"/><stop offset="0.431" stop-color="#f2fffd"/><stop offset="0.504" stop-color="#fffffd"/><stop offset="0.732" stop-color="#ffdad8"/><stop offset="1" stop-color="#ffb8b6"/></linearGradient><linearGradient id="c44"><stop offset="0" stop-color="#aaffff"/><stop offset="0.431" stop-color="#f3ffff"/><stop offset="0.504" stop-color="#fffefd"/><stop offset="0.732" stop-color="#ffd9d9"/><stop offset="1" stop-color="#ffb7b7"/></linearGradient><linearGradient id="c45"><stop offset="0" stop-color="#aafeff"/><stop offset="0.431" stop-color="#f3feff"/><stop offset="0.496" stop-color="#fffeff"/><stop offset="0.732" stop-color="#ffd8d9"/><stop offset="1" stop-color="#ffb6b7"/></linearGradient><linearGradient id="c46"><stop offset="0" stop-color="#aafdff"/><stop offset="0.439" stop-color="#f4fdff"/><stop offset="0.504" stop-color="#fffbfe"/><stop offset="0.74" stop-color="#ffd5d8"/><stop offset="1" stop-color="#ffb5b7"/></linearGradient><linearGradient id="c47"><stop offset="0" stop-color="#aafcff"/><stop offset="0.504" stop-color="#fffafe"/><stop offset="0.74" stop-color="#ffd4d8"/><stop offset="1" stop-color="#ffb4b7"/></linearGradient><linearGradient id="c48"><stop offset="0" stop-color="#aafaff"/><stop offset="0.504" stop-color="#fff9fe"/><stop offset="0.74" stop-color="#ffd3d8"/><stop offset="1" stop-color="#ffb3b7"/></linearGradient><linearGradient id="c49"><stop offset="0" stop-color="#aaf9ff"/><stop offset="0.504" stop-color="#fff7fe"/><stop offset="0.74" stop-color="#ffd2d8"/><stop offset="1" stop-color="#ffb2b8"/></linearGradient><linearGradient id="c50"><stop offset="0" stop-color="#aaf8ff"/><stop offset="0.504" stop-color="#fff6fe"/><stop offset="0.74" stop-color="#ffd1d8"/><stop offset="1" stop-color="#ffb1b8"/></linearGradient><linearGradient id="c51"><stop offset="0" stop-color="#aaf7ff"/><stop offset="0.504" stop-color="#fff5fe"/><stop offset="0.74" stop-color="#ffd0d8"/><stop offset="1" stop-color="#ffb1b8"/></linearGradient><linearGradient id="c52"><stop offset="0" stop-color="#aaf5ff"/><stop offset="0.439" stop-color="#f4f5ff"/><stop offset="0.504" stop-color="#fff4fe"/><stop offset="0.74" stop-color="#ffcfd9"/><stop offset="1" stop-color="#ffb0b8"/></linearGradient><linearGradient id="c53"><stop offset="0" stop-color="#aaf4ff"/><stop offset="0.439" stop-color="#f4f3ff"/><stop offset="0.504" stop-color="#fff3fe"/><stop offset="0.74" stop-color="#ffced9"/><stop offset="1" stop-color="#ffafb8"/></linearGradient><linearGradient id="c54"><stop offset="0" stop-color="#abf3ff"/><stop offset="0.439" stop-color="#f4f2ff"/><stop offset="0.504" stop-color="#fff1fe"/><stop offset="0.74" stop-color="#ffcdd9"/><stop offset="1" stop-color="#ffaeb8"/></linearGradient><linearGradient id="c55"><stop offset="0" stop-color="#abf2ff"/><stop offset="0.447" stop-color="#f5f1ff"/><stop offset="0.504" stop-color="#fff0ff"/><stop offset="0.74" stop-color="#ffccd9"/><stop offset="1" stop-color="#ffadb9"/></linearGradient><linearGradient id="c56"><stop offset="0" stop-color="#abf1ff"/><stop offset="0.447" stop-color="#f5efff"/><stop offset="0.504" stop-color="#ffefff"/><stop offset="0.74" stop-color="#ffcbd9"/><stop offset="1" stop-color="#ffacb9"/></linearGradient><linearGradient id="c57"><stop offset="0" stop-color="#abefff"/><stop offset="0.447" stop-color="#f5eeff"/><stop offset="0.504" stop-color="#ffeeff"/><stop offset="0.74" stop-color="#ffcad9"/><stop offset="1" stop-color="#ffabb9"/></linearGradient><linearGradient id="c58"><stop offset="0" stop-color="#abeeff"/><stop offset="0.447" stop-color="#f5edff"/><stop offset="0.504" stop-color="#ffedff"/><stop offset="0.74" stop-color="#ffc9d9"/><stop offset="1" stop-color="#ffabb9"/></linearGradient><linearGradient id="c59"><stop offset="0" stop-color="#abedff"/><stop offset="0.447" stop-color="#f5ecff"/><stop offset="0.504" stop-color="#ffebff"/><stop offset="0.74" stop-color="#ffc8da"/><stop offset="1" stop-color="#ffaab9"/></linearGradient><linearGradient id="c60"><stop offset="0" stop-color="#abecff"/><stop offset="0.447" stop-color="#f5eaff"/><stop offset="0.504" stop-color="#ffeaff"/><stop offset="0.748" stop-color="#ffc6d9"/><stop offset="1" stop-color="#ffa9b9"/></linearGradient><linearGradient id="c61"><stop offset="0" stop-color="#abebff"/><stop offset="0.447" stop-color="#f5e9ff"/><stop offset="0.512" stop-color="#ffe8fe"/><stop offset="0.756" stop-color="#ffc4d8"/><stop offset="1" stop-color="#ffa8ba"/></linearGradient><linearGradient id="c62"><stop offset="0" stop-color="#abe9ff"/><stop offset="0.512" stop-color="#ffe7fe"/><stop offset="0.756" stop-color="#ffc3d8"/><stop offset="1" stop-color="#ffa7ba"/></linearGradient><linearGradient id="c63"><stop offset="0" stop-color="#abe8ff"/><stop offset="0.512" stop-color="#ffe5fe"/><stop offset="0.756" stop-color="#ffc2d8"/><stop offset="1" stop-color="#ffa6ba"/></linearGradient><linearGradient id="c64"><stop offset="0" stop-color="#abe7ff"/><stop offset="0.512" stop-color="#ffe4fe"/><stop offset="0.756" stop-color="#ffc1d8"/><stop offset="1" stop-color="#ffa6ba"/></linearGradient><linearGradient id="c65"><stop offset="0" stop-color="#abe6ff"/><stop offset="0.512" stop-color="#ffe3fe"/><stop offset="0.756" stop-color="#ffc0d8"/><stop offset="1" stop-color="#ffa5ba"/></linearGradient><linearGradient id="c66"><stop offset="0" stop-color="#abe5ff"/><stop offset="0.512" stop-color="#ffe2fe"/><stop offset="0.756" stop-color="#ffbfd8"/><stop offset="1" stop-color="#ffa4ba"/></linearGradient><linearGradient id="c67"><stop offset="0" stop-color="#ace4ff"/><stop offset="0.512" stop-color="#ffe1fe"/><stop offset="0.756" stop-color="#ffbed8"/><stop offset="1" stop-color="#ffa3bb"/></linearGradient><linearGradient id="c68"><stop offset="0" stop-color="#ace2ff"/><stop offset="0.455" stop-color="#f6e0ff"/><stop offset="0.512" stop-color="#ffe0fe"/><stop offset="0.756" stop-color="#ffbdd9"/><stop offset="1" stop-color="#ffa2bb"/></linearGradient><linearGradient id="c69"><stop offset="0" stop-color="#ace1ff"/><stop offset="0.455" stop-color="#f6dfff"/><stop offset="0.512" stop-color="#ffdefe"/><stop offset="0.756" stop-color="#ffbcd9"/><stop offset="1" stop-color="#ffa1bb"/></linearGradient><linearGradient id="c70"><stop offset="0" stop-color="#ace0ff"/><stop offset="0.455" stop-color="#f6deff"/><stop offset="0.512" stop-color="#ffddff"/><stop offset="0.756" stop-color="#ffbbd9"/><stop offset="1" stop-color="#ffa1bb"/></linearGradient><linearGradient id="c71"><stop offset="0" stop-color="#acdfff"/><stop offset="0.455" stop-color="#f5ddff"/><stop offset="0.512" stop-color="#ffdcff"/><stop offset="0.756" stop-color="#ffbad9"/><stop offset="1" stop-color="#ffa0bb"/></linearGradient><linearGradient id="c72"><stop offset="0" stop-color="#acdeff"/><stop offset="0.455" stop-color="#f5dcff"/><stop offset="0.512" stop-color="#ffdbff"/><stop offset="0.756" stop-color="#ffbad9"/><stop offset="1" stop-color="#ff9fbb"/></linearGradient><linearGradient id="c73"><stop offset="0" stop-color="#acddff"/><stop offset="0.455" stop-color="#f5daff"/><stop offset="0.512" stop-color="#ffdaff"/><stop offset="0.756" stop-color="#ffb9d9"/><stop offset="1" stop-color="#ff9ebc"/></linearGradient><linearGradient id="c74"><stop offset="0" stop-color="#acdcff"/><stop offset="0.463" stop-color="#f7d9ff"/><stop offset="0.52" stop-color="#ffd8fe"/><stop offset="0.764" stop-color="#ffb7d8"/><stop offset="1" stop-color="#ff9dbc"/></linearGradient><linearGradient id="c75"><stop offset="0" stop-color="#acdbff"/><stop offset="0.463" stop-color="#f7d8ff"/><stop offset="0.52" stop-color="#ffd6fe"/><stop offset="0.764" stop-color="#ffb6d8"/><stop offset="1" stop-color="#ff9dbc"/></linearGradient><linearGradient id="c76"><stop offset="0" stop-color="#acd9ff"/><stop offset="0.463" stop-color="#f7d7ff"/><stop offset="0.52" stop-color="#ffd5fe"/><stop offset="0.764" stop-color="#ffb5d9"/><stop offset="1" stop-color="#ff9cbc"/></linearGradient><linearGradient id="c77"><stop offset="0" stop-color="#acd8ff"/><stop offset="0.52" stop-color="#ffd4fe"/><stop offset="0.764" stop-color="#ffb4d9"/><stop offset="1" stop-color="#ff9bbc"/></linearGradient><linearGradient id="c78"><stop offset="0" stop-color="#acd7ff"/><stop offset="0.52" stop-color="#ffd3fe"/><stop offset="0.772" stop-color="#ffb2d8"/><stop offset="1" stop-color="#ff9abc"/></linearGradient><linearGradient id="c79"><stop offset="0" stop-color="#acd6ff"/><stop offset="0.52" stop-color="#ffd2fe"/><stop offset="0.772" stop-color="#ffb1d8"/><stop offset="1" stop-color="#ff99bd"/></linearGradient><linearGradient id="c80"><stop offset="0" stop-color="#acd5ff"/><stop offset="0.52" stop-color="#ffd1fe"/><stop offset="0.772" stop-color="#ffb0d8"/><stop offset="1" stop-color="#ff99bd"/></linearGradient><linearGradient id="c81"><stop offset="0" stop-color="#add4ff"/><stop offset="0.52" stop-color="#ffd0fe"/><stop offset="0.772" stop-color="#ffafd8"/><stop offset="1" stop-color="#ff98bd"/></linearGradient><linearGradient id="c82"><stop offset="0" stop-color="#add3ff"/><stop offset="0.52" stop-color="#ffcffe"/><stop offset="0.772" stop-color="#ffaed8"/><stop offset="1" stop-color="#ff97bd"/></linearGradient><linearGradient id="c83"><stop offset="0" stop-color="#add2ff"/><stop offset="0.52" stop-color="#ffcefe"/><stop offset="0.772" stop-color="#ffadd8"/><stop offset="1" stop-color="#ff96bd"/></linearGradient><linearGradient id="c84"><stop offset="0" stop-color="#add1ff"/><stop offset="0.52" stop-color="#ffcdfe"/><stop offset="0.772" stop-color="#ffadd9"/><stop offset="1" stop-color="#ff95bd"/></linearGradient><linearGradient id="c85"><stop offset="0" stop-color="#add0ff"/><stop offset="0.472" stop-color="#f7ccff"/><stop offset="0.52" stop-color="#ffccff"/><stop offset="0.772" stop-color="#ffacd9"/><stop offset="1" stop-color="#ff95bd"/></linearGradient><linearGradient id="c86"><stop offset="0" stop-color="#adcfff"/><stop offset="0.472" stop-color="#f7cbff"/><stop offset="0.52" stop-color="#ffcaff"/><stop offset="0.772" stop-color="#ffabd9"/><stop offset="1" stop-color="#ff94be"/></linearGradient><linearGradient id="c87"><stop offset="0" stop-color="#adcdff"/><stop offset="0.472" stop-color="#f7caff"/><stop offset="0.528" stop-color="#ffc8fd"/><stop offset="0.78" stop-color="#ffa9d8"/><stop offset="1" stop-color="#ff93be"/></linearGradient><linearGradient id="c88"><stop offset="0" stop-color="#adccff"/><stop offset="0.472" stop-color="#f7c9ff"/><stop offset="0.528" stop-color="#ffc7fd"/><stop offset="0.78" stop-color="#ffa8d8"/><stop offset="1" stop-color="#ff92be"/></linearGradient></defs><rect x="583.9" y="745.50" width="246.6" height="2.60" fill="url(#c0)"/><rect x="583.9" y="747.50" width="246.6" height="2.60" fill="url(#c1)"/><rect x="583.9" y="749.50" width="246.6" height="2.60" fill="url(#c2)"/><rect x="583.9" y="751.50" width="246.6" height="2.60" fill="url(#c3)"/><rect x="583.9" y="753.50" width="246.6" height="2.60" fill="url(#c4)"/><rect x="583.9" y="755.50" width="246.6" height="2.60" fill="url(#c5)"/><rect x="583.9" y="757.50" width="246.6" height="2.60" fill="url(#c6)"/><rect x="583.9" y="759.50" width="246.6" height="2.60" fill="url(#c7)"/><rect x="583.9" y="761.50" width="246.6" height="2.60" fill="url(#c8)"/><rect x="583.9" y="763.50" width="246.6" height="2.60" fill="url(#c9)"/><rect x="583.9" y="765.50" width="246.6" height="2.60" fill="url(#c10)"/><rect x="583.9" y="767.50" width="246.6" height="2.60" fill="url(#c11)"/><rect x="583.9" y="769.50" width="246.6" height="2.60" fill="url(#c12)"/><rect x="583.9" y="771.50" width="246.6" height="2.60" fill="url(#c13)"/><rect x="583.9" y="773.50" width="246.6" height="2.60" fill="url(#c14)"/><rect x="583.9" y="775.50" width="246.6" height="2.60" fill="url(#c15)"/><rect x="583.9" y="777.50" width="246.6" height="2.60" fill="url(#c16)"/><rect x="583.9" y="779.50" width="246.6" height="2.60" fill="url(#c17)"/><rect x="583.9" y="781.50" width="246.6" height="2.60" fill="url(#c18)"/><rect x="583.9" y="783.50" width="246.6" height="2.60" fill="url(#c19)"/><rect x="583.9" y="785.50" width="246.6" height="2.60" fill="url(#c20)"/><rect x="583.9" y="787.50" width="246.6" height="2.60" fill="url(#c21)"/><rect x="583.9" y="789.50" width="246.6" height="2.60" fill="url(#c22)"/><rect x="583.9" y="791.50" width="246.6" height="2.60" fill="url(#c23)"/><rect x="583.9" y="793.50" width="246.6" height="2.60" fill="url(#c24)"/><rect x="583.9" y="795.50" width="246.6" height="2.60" fill="url(#c25)"/><rect x="583.9" y="797.50" width="246.6" height="2.60" fill="url(#c26)"/><rect x="583.9" y="799.50" width="246.6" height="2.60" fill="url(#c27)"/><rect x="583.9" y="801.50" width="246.6" height="2.60" fill="url(#c28)"/><rect x="583.9" y="803.50" width="246.6" height="2.60" fill="url(#c29)"/><rect x="583.9" y="805.50" width="246.6" height="2.60" fill="url(#c30)"/><rect x="583.9" y="807.50" width="246.6" height="2.60" fill="url(#c31)"/><rect x="583.9" y="809.50" width="246.6" height="2.60" fill="url(#c32)"/><rect x="583.9" y="811.50" width="246.6" height="2.60" fill="url(#c33)"/><rect x="583.9" y="813.50" width="246.6" height="2.60" fill="url(#c34)"/><rect x="583.9" y="815.50" width="246.6" height="2.60" fill="url(#c35)"/><rect x="583.9" y="817.50" width="246.6" height="2.60" fill="url(#c36)"/><rect x="583.9" y="819.50" width="246.6" height="2.60" fill="url(#c37)"/><rect x="583.9" y="821.50" width="246.6" height="2.60" fill="url(#c38)"/><rect x="583.9" y="823.50" width="246.6" height="2.60" fill="url(#c39)"/><rect x="583.9" y="825.50" width="246.6" height="2.60" fill="url(#c40)"/><rect x="583.9" y="827.50" width="246.6" height="2.60" fill="url(#c41)"/><rect x="583.9" y="829.50" width="246.6" height="2.60" fill="url(#c42)"/><rect x="583.9" y="831.50" width="246.6" height="2.60" fill="url(#c43)"/><rect x="583.9" y="833.50" width="246.6" height="2.60" fill="url(#c44)"/><rect x="583.9" y="835.50" width="246.6" height="2.60" fill="url(#c45)"/><rect x="583.9" y="837.50" width="246.6" height="2.60" fill="url(#c46)"/><rect x="583.9" y="839.50" width="246.6" height="2.60" fill="url(#c47)"/><rect x="583.9" y="841.50" width="246.6" height="2.60" fill="url(#c48)"/><rect x="583.9" y="843.50" width="246.6" height="2.60" fill="url(#c49)"/><rect x="583.9" y="845.50" width="246.6" height="2.60" fill="url(#c50)"/><rect x="583.9" y="847.50" width="246.6" height="2.60" fill="url(#c51)"/><rect x="583.9" y="849.50" width="246.6" height="2.60" fill="url(#c52)"/><rect x="583.9" y="851.50" width="246.6" height="2.60" fill="url(#c53)"/><rect x="583.9" y="853.50" width="246.6" height="2.60" fill="url(#c54)"/><rect x="583.9" y="855.50" width="246.6" height="2.60" fill="url(#c55)"/><rect x="583.9" y="857.50" width="246.6" height="2.60" fill="url(#c56)"/><rect x="583.9" y="859.50" width="246.6" height="2.60" fill="url(#c57)"/><rect x="583.9" y="861.50" width="246.6" height="2.60" fill="url(#c58)"/><rect x="583.9" y="863.50" width="246.6" height="2.60" fill="url(#c59)"/><rect x="583.9" y="865.50" width="246.6" height="2.60" fill="url(#c60)"/><rect x="583.9" y="867.50" width="246.6" height="2.60" fill="url(#c61)"/><rect x="583.9" y="869.50" width="246.6" height="2.60" fill="url(#c62)"/><rect x="583.9" y="871.50" width="246.6" height="2.60" fill="url(#c63)"/><rect x="583.9" y="873.50" width="246.6" height="2.60" fill="url(#c64)"/><rect x="583.9" y="875.50" width="246.6" height="2.60" fill="url(#c65)"/><rect x="583.9" y="877.50" width="246.6" height="2.60" fill="url(#c66)"/><rect x="583.9" y="879.50" width="246.6" height="2.60" fill="url(#c67)"/><rect x="583.9" y="881.50" width="246.6" height="2.60" fill="url(#c68)"/><rect x="583.9" y="883.50" width="246.6" height="2.60" fill="url(#c69)"/><rect x="583.9" y="885.50" width="246.6" height="2.60" fill="url(#c70)"/><rect x="583.9" y="887.50" width="246.6" height="2.60" fill="url(#c71)"/><rect x="583.9" y="889.50" width="246.6" height="2.60" fill="url(#c72)"/><rect x="583.9" y="891.50" width="246.6" height="2.60" fill="url(#c73)"/><rect x="583.9" y="893.50" width="246.6" height="2.60" fill="url(#c74)"/><rect x="583.9" y="895.50" width="246.6" height="2.60" fill="url(#c75)"/><rect x="583.9" y="897.50" width="246.6" height="2.60" fill="url(#c76)"/><rect x="583.9" y="899.50" width="246.6" height="2.60" fill="url(#c77)"/><rect x="583.9" y="901.50" width="246.6" height="2.60" fill="url(#c78)"/><rect x="583.9" y="903.50" width="246.6" height="2.60" fill="url(#c79)"/><rect x="583.9" y="905.50" width="246.6" height="2.60" fill="url(#c80)"/><rect x="583.9" y="907.50" width="246.6" height="2.60" fill="url(#c81)"/><rect x="583.9" y="909.50" width="246.6" height="2.60" fill="url(#c82)"/><rect x="583.9" y="911.50" width="246.6" height="2.60" fill="url(#c83)"/><rect x="583.9" y="913.50" width="246.6" height="2.60" fill="url(#c84)"/><rect x="583.9" y="915.50" width="246.6" height="2.60" fill="url(#c85)"/><rect x="583.9" y="917.50" width="246.6" height="2.60" fill="url(#c86)"/><rect x="583.9" y="919.50" width="246.6" height="2.60" fill="url(#c87)"/><rect x="583.9" y="921.50" width="246.6" height="1.50" fill="url(#c88)"/><path d="M616.5 923.6 L830.8 774.6" stroke="#000" stroke-width="2.6" clip-path="url(#cp)"/><path d="M583.6 745.5V923.3H830.5" stroke="#999" stroke-width="1.2" fill="none"/><path d="M578 759.9H583.9M594.5 923.0V928.5M578 795.3H583.9M643.5 923.0V928.5M578 830.7H583.9M692.5 923.0V928.5M578 866.1H583.9M741.5 923.0V928.5M578 901.5H583.9M790.5 923.0V928.5" stroke="#ddd" stroke-width="1.3" fill="none"/><circle cx="664.8" cy="855.6" r="4.1" fill="#0a0a0a" stroke="#141c20" stroke-width="1.2"/><circle cx="670.2" cy="848.0" r="4.1" fill="#1c1c1c" stroke="#141c20" stroke-width="1.2"/><circle cx="669.4" cy="847.8" r="4.1" fill="#353535" stroke="#141c20" stroke-width="1.2"/><circle cx="668.4" cy="847.8" r="4.1" fill="#4f4f4f" stroke="#141c20" stroke-width="1.2"/><circle cx="667.2" cy="848.0" r="4.1" fill="#696969" stroke="#141c20" stroke-width="1.2"/><circle cx="666.0" cy="848.3" r="4.1" fill="#838383" stroke="#141c20" stroke-width="1.2"/><circle cx="664.4" cy="848.7" r="4.1" fill="#9c9c9c" stroke="#141c20" stroke-width="1.2"/><circle cx="662.7" cy="849.2" r="4.1" fill="#b4b4b4" stroke="#141c20" stroke-width="1.2"/><circle cx="658.8" cy="850.4" r="4.1" fill="#cdcdcd" stroke="#141c20" stroke-width="1.2"/><circle cx="653.3" cy="855.1" r="4.1" fill="#efe9e6" stroke="#141c20" stroke-width="1.2"/><circle cx="639.1" cy="869.2" r="4.1" fill="#fff" stroke="#141c20" stroke-width="1.2"/><rect x="700.6" y="828.2" width="12" height="12" fill="#fff" stroke="#000" stroke-width="2"/></svg>
<span class="t" style="left:547.88px;top:749.86px;font-size:15.12px;line-height:19px;color:#ddd;transform:scaleX(0.9700);transform-origin:right center;-webkit-text-stroke:0.2px #ddd;">0,35</span>
<span class="t" style="left:547.88px;top:785.26px;font-size:15.12px;line-height:19px;color:#ddd;transform:scaleX(0.9700);transform-origin:right center;-webkit-text-stroke:0.2px #ddd;">0,34</span>
<span class="t" style="left:547.88px;top:820.66px;font-size:15.12px;line-height:19px;color:#ddd;transform:scaleX(0.9700);transform-origin:right center;-webkit-text-stroke:0.2px #ddd;">0,33</span>
<span class="t" style="left:547.88px;top:856.06px;font-size:15.12px;line-height:19px;color:#ddd;transform:scaleX(0.9700);transform-origin:right center;-webkit-text-stroke:0.2px #ddd;">0,32</span>
<span class="t" style="left:547.88px;top:891.46px;font-size:15.12px;line-height:19px;color:#ddd;transform:scaleX(0.9700);transform-origin:right center;-webkit-text-stroke:0.2px #ddd;">0,31</span>
<span class="t" style="left:579.79px;top:929.96px;font-size:15.12px;line-height:19px;color:#ddd;transform:scaleX(0.9700);transform-origin:center center;-webkit-text-stroke:0.2px #ddd;">0,29</span>
<span class="t" style="left:632.99px;top:929.96px;font-size:15.12px;line-height:19px;color:#ddd;transform:scaleX(0.9700);transform-origin:center center;-webkit-text-stroke:0.2px #ddd;">0,3</span>
<span class="t" style="left:677.79px;top:929.96px;font-size:15.12px;line-height:19px;color:#ddd;transform:scaleX(0.9700);transform-origin:center center;-webkit-text-stroke:0.2px #ddd;">0,31</span>
<span class="t" style="left:726.79px;top:929.96px;font-size:15.12px;line-height:19px;color:#ddd;transform:scaleX(0.9700);transform-origin:center center;-webkit-text-stroke:0.2px #ddd;">0,32</span>
<span class="t" style="left:775.79px;top:929.96px;font-size:15.12px;line-height:19px;color:#ddd;transform:scaleX(0.9700);transform-origin:center center;-webkit-text-stroke:0.2px #ddd;">0,33</span>
<div class="b" style="left:841.60px;top:736.00px;width:889.90px;height:30.00px;background:linear-gradient(#1c1c1c 0%,#303030 7%,#282828 46%,#151515 54%,#111 100%);box-shadow:0 0 0 1px #242424;"></div>
<span class="t" style="left:1027.54px;top:741.81px;font-size:14.97px;line-height:18px;color:#f4f4f4;transform:scaleX(1.0200);transform-origin:center center;text-shadow:0 0 .3px #fff;">0</span>
<span class="t" style="left:1089.87px;top:741.81px;font-size:14.97px;line-height:18px;color:#f4f4f4;transform:scaleX(1.0200);transform-origin:center center;text-shadow:0 0 .3px #fff;">10</span>
<span class="t" style="left:1156.37px;top:741.81px;font-size:14.97px;line-height:18px;color:#f4f4f4;transform:scaleX(1.0200);transform-origin:center center;text-shadow:0 0 .3px #fff;">20</span>
<span class="t" style="left:1222.87px;top:741.81px;font-size:14.97px;line-height:18px;color:#f4f4f4;transform:scaleX(1.0200);transform-origin:center center;text-shadow:0 0 .3px #fff;">30</span>
<span class="t" style="left:1289.37px;top:741.81px;font-size:14.97px;line-height:18px;color:#f4f4f4;transform:scaleX(1.0200);transform-origin:center center;text-shadow:0 0 .3px #fff;">40</span>
<span class="t" style="left:1355.87px;top:741.81px;font-size:14.97px;line-height:18px;color:#f4f4f4;transform:scaleX(1.0200);transform-origin:center center;text-shadow:0 0 .3px #fff;">50</span>
<span class="t" style="left:1422.37px;top:741.81px;font-size:14.97px;line-height:18px;color:#f4f4f4;transform:scaleX(1.0200);transform-origin:center center;text-shadow:0 0 .3px #fff;">60</span>
<span class="t" style="left:1488.87px;top:741.81px;font-size:14.97px;line-height:18px;color:#f4f4f4;transform:scaleX(1.0200);transform-origin:center center;text-shadow:0 0 .3px #fff;">70</span>
<span class="t" style="left:1555.37px;top:741.81px;font-size:14.97px;line-height:18px;color:#f4f4f4;transform:scaleX(1.0200);transform-origin:center center;text-shadow:0 0 .3px #fff;">80</span>
<span class="t" style="left:1621.87px;top:741.81px;font-size:14.97px;line-height:18px;color:#f4f4f4;transform:scaleX(1.0200);transform-origin:center center;text-shadow:0 0 .3px #fff;">90</span>
<span class="t" style="left:1684.21px;top:741.81px;font-size:14.97px;line-height:18px;color:#f4f4f4;transform:scaleX(1.0200);transform-origin:center center;text-shadow:0 0 .3px #fff;">100</span>
<div class="b" style="left:841.60px;top:765.80px;width:889.90px;height:26.85px;background:#444;"></div>
<span class="t" style="left:854.70px;top:769.79px;font-size:15.60px;line-height:19px;color:#f6f6f6;transform:scaleX(0.9957);transform-origin:left center;font-weight:bold;">x: CIE31</span>
<span class="t" style="left:1003.00px;top:769.79px;font-size:15.60px;line-height:19px;color:#f0f0f0;transform:scaleX(1.0240);transform-origin:left center;">0,28</span>
<span class="t" style="left:1069.50px;top:769.79px;font-size:15.60px;line-height:19px;color:#f0f0f0;transform:scaleX(1.0240);transform-origin:left center;">0,30</span>
<span class="t" style="left:1136.00px;top:769.79px;font-size:15.60px;line-height:19px;color:#f0f0f0;transform:scaleX(1.0240);transform-origin:left center;">0,31</span>
<span class="t" style="left:1202.50px;top:769.79px;font-size:15.60px;line-height:19px;color:#f0f0f0;transform:scaleX(1.0240);transform-origin:left center;">0,31</span>
<span class="t" style="left:1269.00px;top:769.79px;font-size:15.60px;line-height:19px;color:#f0f0f0;transform:scaleX(1.0240);transform-origin:left center;">0,30</span>
<span class="t" style="left:1335.50px;top:769.79px;font-size:15.60px;line-height:19px;color:#f0f0f0;transform:scaleX(1.0240);transform-origin:left center;">0,30</span>
<span class="t" style="left:1402.00px;top:769.79px;font-size:15.60px;line-height:19px;color:#f0f0f0;transform:scaleX(1.0240);transform-origin:left center;">0,30</span>
<span class="t" style="left:1468.50px;top:769.79px;font-size:15.60px;line-height:19px;color:#f0f0f0;transform:scaleX(1.0240);transform-origin:left center;">0,30</span>
<span class="t" style="left:1535.00px;top:769.79px;font-size:15.60px;line-height:19px;color:#f0f0f0;transform:scaleX(1.0240);transform-origin:left center;">0,30</span>
<span class="t" style="left:1601.50px;top:769.79px;font-size:15.60px;line-height:19px;color:#f0f0f0;transform:scaleX(1.0240);transform-origin:left center;">0,30</span>
<span class="t" style="left:1668.00px;top:769.79px;font-size:15.60px;line-height:19px;color:#f0f0f0;transform:scaleX(1.0240);transform-origin:left center;">0,30</span>
<div class="b" style="left:841.60px;top:792.35px;width:889.90px;height:26.85px;background:#808080;"></div>
<span class="t" style="left:854.70px;top:796.34px;font-size:15.60px;line-height:19px;color:#f6f6f6;transform:scaleX(0.9876);transform-origin:left center;font-weight:bold;">y: CIE31</span>
<span class="t" style="left:1003.00px;top:796.34px;font-size:15.60px;line-height:19px;color:#f0f0f0;transform:scaleX(1.0240);transform-origin:left center;">0,30</span>
<span class="t" style="left:1069.50px;top:796.34px;font-size:15.60px;line-height:19px;color:#f0f0f0;transform:scaleX(1.0240);transform-origin:left center;">0,32</span>
<span class="t" style="left:1136.00px;top:796.34px;font-size:15.60px;line-height:19px;color:#f0f0f0;transform:scaleX(1.0240);transform-origin:left center;">0,32</span>
<span class="t" style="left:1202.50px;top:796.34px;font-size:15.60px;line-height:19px;color:#f0f0f0;transform:scaleX(1.0240);transform-origin:left center;">0,32</span>
<span class="t" style="left:1269.00px;top:796.34px;font-size:15.60px;line-height:19px;color:#f0f0f0;transform:scaleX(1.0240);transform-origin:left center;">0,32</span>
<span class="t" style="left:1335.50px;top:796.34px;font-size:15.60px;line-height:19px;color:#f0f0f0;transform:scaleX(1.0240);transform-origin:left center;">0,32</span>
<span class="t" style="left:1402.00px;top:796.34px;font-size:15.60px;line-height:19px;color:#f0f0f0;transform:scaleX(1.0240);transform-origin:left center;">0,32</span>
<span class="t" style="left:1468.50px;top:796.34px;font-size:15.60px;line-height:19px;color:#f0f0f0;transform:scaleX(1.0240);transform-origin:left center;">0,32</span>
<span class="t" style="left:1535.00px;top:796.34px;font-size:15.60px;line-height:19px;color:#f0f0f0;transform:scaleX(1.0240);transform-origin:left center;">0,32</span>
<span class="t" style="left:1601.50px;top:796.34px;font-size:15.60px;line-height:19px;color:#f0f0f0;transform:scaleX(1.0240);transform-origin:left center;">0,32</span>
<span class="t" style="left:1668.00px;top:796.34px;font-size:15.60px;line-height:19px;color:#f0f0f0;transform:scaleX(1.0240);transform-origin:left center;">0,32</span>
<div class="b" style="left:841.60px;top:818.90px;width:889.90px;height:26.85px;background:#444;"></div>
<span class="t" style="left:854.70px;top:822.89px;font-size:15.60px;line-height:19px;color:#f6f6f6;transform:scaleX(0.8457);transform-origin:left center;font-weight:bold;">Y</span>
<span class="t" style="left:1003.00px;top:822.89px;font-size:15.60px;line-height:19px;color:#f0f0f0;transform:scaleX(1.0240);transform-origin:left center;">0,38</span>
<span class="t" style="left:1069.50px;top:822.89px;font-size:15.60px;line-height:19px;color:#f0f0f0;transform:scaleX(1.0240);transform-origin:left center;">3,19</span>
<span class="t" style="left:1136.00px;top:822.89px;font-size:15.60px;line-height:19px;color:#f0f0f0;transform:scaleX(1.0240);transform-origin:left center;">11,51</span>
<span class="t" style="left:1202.50px;top:822.89px;font-size:15.60px;line-height:19px;color:#f0f0f0;transform:scaleX(1.0240);transform-origin:left center;">26,56</span>
<span class="t" style="left:1269.00px;top:822.89px;font-size:15.60px;line-height:19px;color:#f0f0f0;transform:scaleX(1.0240);transform-origin:left center;">48,99</span>
<span class="t" style="left:1335.50px;top:822.89px;font-size:15.60px;line-height:19px;color:#f0f0f0;transform:scaleX(1.0240);transform-origin:left center;">79,68</span>
<span class="t" style="left:1402.00px;top:822.89px;font-size:15.60px;line-height:19px;color:#f0f0f0;transform:scaleX(1.0240);transform-origin:left center;">116,72</span>
<span class="t" style="left:1468.50px;top:822.89px;font-size:15.60px;line-height:19px;color:#f0f0f0;transform:scaleX(1.0240);transform-origin:left center;">164,19</span>
<span class="t" style="left:1535.00px;top:822.89px;font-size:15.60px;line-height:19px;color:#f0f0f0;transform:scaleX(1.0240);transform-origin:left center;">224,23</span>
<span class="t" style="left:1601.50px;top:822.89px;font-size:15.60px;line-height:19px;color:#f0f0f0;transform:scaleX(1.0240);transform-origin:left center;">290,34</span>
<span class="t" style="left:1668.00px;top:822.89px;font-size:15.60px;line-height:19px;color:#f0f0f0;transform:scaleX(1.0240);transform-origin:left center;">356,94</span>
<div class="b" style="left:841.60px;top:845.45px;width:889.90px;height:26.85px;background:#808080;"></div>
<span class="t" style="left:854.70px;top:849.44px;font-size:15.60px;line-height:19px;color:#f6f6f6;transform:scaleX(1.0479);transform-origin:left center;font-weight:bold;">Target Y</span>
<span class="t" style="left:1003.00px;top:849.44px;font-size:15.60px;line-height:19px;color:#f0f0f0;transform:scaleX(1.0240);transform-origin:left center;">0,00</span>
<span class="t" style="left:1069.50px;top:849.44px;font-size:15.60px;line-height:19px;color:#f0f0f0;transform:scaleX(1.0240);transform-origin:left center;">3,69</span>
<span class="t" style="left:1136.00px;top:849.44px;font-size:15.60px;line-height:19px;color:#f0f0f0;transform:scaleX(1.0240);transform-origin:left center;">11,82</span>
<span class="t" style="left:1202.50px;top:849.44px;font-size:15.60px;line-height:19px;color:#f0f0f0;transform:scaleX(1.0240);transform-origin:left center;">25,80</span>
<span class="t" style="left:1269.00px;top:849.44px;font-size:15.60px;line-height:19px;color:#f0f0f0;transform:scaleX(1.0240);transform-origin:left center;">47,43</span>
<span class="t" style="left:1335.50px;top:849.44px;font-size:15.60px;line-height:19px;color:#f0f0f0;transform:scaleX(1.0240);transform-origin:left center;">77,05</span>
<span class="t" style="left:1402.00px;top:849.44px;font-size:15.60px;line-height:19px;color:#f0f0f0;transform:scaleX(1.0240);transform-origin:left center;">113,70</span>
<span class="t" style="left:1468.50px;top:849.44px;font-size:15.60px;line-height:19px;color:#f0f0f0;transform:scaleX(1.0240);transform-origin:left center;">158,91</span>
<span class="t" style="left:1535.00px;top:849.44px;font-size:15.60px;line-height:19px;color:#f0f0f0;transform:scaleX(1.0240);transform-origin:left center;">215,53</span>
<span class="t" style="left:1601.50px;top:849.44px;font-size:15.60px;line-height:19px;color:#f0f0f0;transform:scaleX(1.0240);transform-origin:left center;">282,45</span>
<span class="t" style="left:1668.00px;top:849.44px;font-size:15.60px;line-height:19px;color:#f0f0f0;transform:scaleX(1.0240);transform-origin:left center;">356,94</span>
<div class="b" style="left:841.60px;top:872.00px;width:889.90px;height:26.85px;background:#444;"></div>
<span class="t" style="left:854.70px;top:875.99px;font-size:15.60px;line-height:19px;color:#f6f6f6;transform:scaleX(1.0628);transform-origin:left center;font-weight:bold;">Gamma Log/Log</span>
<span class="t" style="left:1003.00px;top:875.99px;font-size:15.60px;line-height:19px;color:#f0f0f0;transform:scaleX(1.0240);transform-origin:left center;">1,28</span>
<span class="t" style="left:1069.50px;top:875.99px;font-size:15.60px;line-height:19px;color:#f0f0f0;transform:scaleX(1.0240);transform-origin:left center;">2,07</span>
<span class="t" style="left:1136.00px;top:875.99px;font-size:15.60px;line-height:19px;color:#f0f0f0;transform:scaleX(1.0240);transform-origin:left center;">2,13</span>
<span class="t" style="left:1202.50px;top:875.99px;font-size:15.60px;line-height:19px;color:#f0f0f0;transform:scaleX(1.0240);transform-origin:left center;">2,15</span>
<span class="t" style="left:1269.00px;top:875.99px;font-size:15.60px;line-height:19px;color:#f0f0f0;transform:scaleX(1.0240);transform-origin:left center;">2,17</span>
<span class="t" style="left:1335.50px;top:875.99px;font-size:15.60px;line-height:19px;color:#f0f0f0;transform:scaleX(1.0240);transform-origin:left center;">2,18</span>
<span class="t" style="left:1402.00px;top:875.99px;font-size:15.60px;line-height:19px;color:#f0f0f0;transform:scaleX(1.0240);transform-origin:left center;">2,19</span>
<span class="t" style="left:1468.50px;top:875.99px;font-size:15.60px;line-height:19px;color:#f0f0f0;transform:scaleX(1.0240);transform-origin:left center;">2,16</span>
<span class="t" style="left:1535.00px;top:875.99px;font-size:15.60px;line-height:19px;color:#f0f0f0;transform:scaleX(1.0240);transform-origin:left center;">2,08</span>
<span class="t" style="left:1601.50px;top:875.99px;font-size:15.60px;line-height:19px;color:#f0f0f0;transform:scaleX(1.0240);transform-origin:left center;">2,00</span>
<span class="t" style="left:1668.00px;top:875.99px;font-size:15.60px;line-height:19px;color:#f0f0f0;transform:scaleX(1.0240);transform-origin:left center;">2,27</span>
<div class="b" style="left:841.60px;top:898.55px;width:889.90px;height:26.85px;background:#808080;"></div>
<span class="t" style="left:854.70px;top:902.54px;font-size:15.60px;line-height:19px;color:#f6f6f6;transform:scaleX(0.9014);transform-origin:left center;font-weight:bold;">CCT</span>
<span class="t" style="left:1003.00px;top:902.54px;font-size:15.60px;line-height:19px;color:#f0f0f0;transform:scaleX(1.0240);transform-origin:left center;">9163,00</span>
<span class="t" style="left:1069.50px;top:902.54px;font-size:15.60px;line-height:19px;color:#f0f0f0;transform:scaleX(1.0240);transform-origin:left center;">7065,00</span>
<span class="t" style="left:1136.00px;top:902.54px;font-size:15.60px;line-height:19px;color:#f0f0f0;transform:scaleX(1.0240);transform-origin:left center;">6977,00</span>
<span class="t" style="left:1202.50px;top:902.54px;font-size:15.60px;line-height:19px;color:#f0f0f0;transform:scaleX(1.0240);transform-origin:left center;">6972,00</span>
<span class="t" style="left:1269.00px;top:902.54px;font-size:15.60px;line-height:19px;color:#f0f0f0;transform:scaleX(1.0240);transform-origin:left center;">6987,00</span>
<span class="t" style="left:1335.50px;top:902.54px;font-size:15.60px;line-height:19px;color:#f0f0f0;transform:scaleX(1.0240);transform-origin:left center;">7008,00</span>
<span class="t" style="left:1402.00px;top:902.54px;font-size:15.60px;line-height:19px;color:#f0f0f0;transform:scaleX(1.0240);transform-origin:left center;">7028,00</span>
<span class="t" style="left:1468.50px;top:902.54px;font-size:15.60px;line-height:19px;color:#f0f0f0;transform:scaleX(1.0240);transform-origin:left center;">7061,00</span>
<span class="t" style="left:1535.00px;top:902.54px;font-size:15.60px;line-height:19px;color:#f0f0f0;transform:scaleX(1.0240);transform-origin:left center;">7109,00</span>
<span class="t" style="left:1601.50px;top:902.54px;font-size:15.60px;line-height:19px;color:#f0f0f0;transform:scaleX(1.0240);transform-origin:left center;">7197,00</span>
<span class="t" style="left:1668.00px;top:902.54px;font-size:15.60px;line-height:19px;color:#f0f0f0;transform:scaleX(1.0240);transform-origin:left center;">7437,00</span>
<div class="b" style="left:841.60px;top:925.10px;width:889.90px;height:26.85px;background:#444;"></div>
<span class="t" style="left:854.70px;top:929.09px;font-size:15.60px;line-height:19px;color:#f6f6f6;transform:scaleX(1.0469);transform-origin:left center;font-weight:bold;">ΔE 2000</span>
<span class="t" style="left:1003.00px;top:929.09px;font-size:15.60px;line-height:19px;color:#f0f0f0;transform:scaleX(1.0240);transform-origin:left center;">0,75</span>
<span class="t" style="left:1069.50px;top:929.09px;font-size:15.60px;line-height:19px;color:#f0f0f0;transform:scaleX(1.0240);transform-origin:left center;">1,19</span>
<span class="t" style="left:1136.00px;top:929.09px;font-size:15.60px;line-height:19px;color:#f0f0f0;transform:scaleX(1.0240);transform-origin:left center;">1,29</span>
<span class="t" style="left:1202.50px;top:929.09px;font-size:15.60px;line-height:19px;color:#f0f0f0;transform:scaleX(1.0240);transform-origin:left center;">1,75</span>
<span class="t" style="left:1269.00px;top:929.09px;font-size:15.60px;line-height:19px;color:#f0f0f0;transform:scaleX(1.0240);transform-origin:left center;">2,23</span>
<span class="t" style="left:1335.50px;top:929.09px;font-size:15.60px;line-height:19px;color:#f0f0f0;transform:scaleX(1.0240);transform-origin:left center;">2,74</span>
<span class="t" style="left:1402.00px;top:929.09px;font-size:15.60px;line-height:19px;color:#f0f0f0;transform:scaleX(1.0240);transform-origin:left center;">3,15</span>
<span class="t" style="left:1468.50px;top:929.09px;font-size:15.60px;line-height:19px;color:#f0f0f0;transform:scaleX(1.0240);transform-origin:left center;">3,70</span>
<span class="t" style="left:1535.00px;top:929.09px;font-size:15.60px;line-height:19px;color:#f0f0f0;transform:scaleX(1.0240);transform-origin:left center;">4,32</span>
<span class="t" style="left:1601.50px;top:929.09px;font-size:15.60px;line-height:19px;color:#f0f0f0;transform:scaleX(1.0240);transform-origin:left center;">4,98</span>
<span class="t" style="left:1668.00px;top:929.09px;font-size:15.60px;line-height:19px;color:#f0f0f0;transform:scaleX(1.0240);transform-origin:left center;">6,27</span>
<div class="b" style="left:202.4px;top:989px;width:124.6px;height:60px;border-radius:5px 5px 0 0;background:linear-gradient(#a2a2a2 0%,#8a8a8a 30%,#6c6c6c 72%,#585858 100%);border:1px solid #9c9c9c;border-top-color:#adadad;border-bottom:none;border-right-color:#777;box-sizing:border-box;"></div>
<div class="b" style="left:207.5px;top:993.8px;width:114.4px;height:35.6px;border-radius:3.5px;background:#000;box-shadow:0 0 1.5px rgba(0,0,0,.4),inset 0 1px 1.5px rgba(0,0,0,.3);"></div>
<span class="t" style="left:261.71px;top:1035.10px;font-size:10.40px;line-height:13px;color:#2c2c2c;transform:scaleX(1.0600);transform-origin:center center;font-weight:bold;">0</span>
<div class="b" style="left:329.2px;top:989px;width:124.6px;height:60px;border-radius:5px 5px 0 0;background:linear-gradient(#a2a2a2 0%,#8a8a8a 30%,#6c6c6c 72%,#585858 100%);border:1px solid #9c9c9c;border-top-color:#adadad;border-bottom:none;border-right-color:#777;box-sizing:border-box;"></div>
<div class="b" style="left:334.3px;top:993.8px;width:114.4px;height:35.6px;border-radius:3.5px;background:#1a1a1a;box-shadow:0 0 1.5px rgba(0,0,0,.4),inset 0 1px 1.5px rgba(0,0,0,.3);"></div>
<span class="t" style="left:385.62px;top:1035.10px;font-size:10.40px;line-height:13px;color:#2c2c2c;transform:scaleX(1.0600);transform-origin:center center;font-weight:bold;">10</span>
<div class="b" style="left:456.0px;top:989px;width:124.6px;height:60px;border-radius:5px 5px 0 0;background:linear-gradient(#a2a2a2 0%,#8a8a8a 30%,#6c6c6c 72%,#585858 100%);border:1px solid #9c9c9c;border-top-color:#adadad;border-bottom:none;border-right-color:#777;box-sizing:border-box;"></div>
<div class="b" style="left:461.1px;top:993.8px;width:114.4px;height:35.6px;border-radius:3.5px;background:#333;box-shadow:0 0 1.5px rgba(0,0,0,.4),inset 0 1px 1.5px rgba(0,0,0,.3);"></div>
<span class="t" style="left:512.42px;top:1035.10px;font-size:10.40px;line-height:13px;color:#2c2c2c;transform:scaleX(1.0600);transform-origin:center center;font-weight:bold;">20</span>
<div class="b" style="left:582.8px;top:989px;width:124.6px;height:60px;border-radius:5px 5px 0 0;background:linear-gradient(#a2a2a2 0%,#8a8a8a 30%,#6c6c6c 72%,#585858 100%);border:1px solid #9c9c9c;border-top-color:#adadad;border-bottom:none;border-right-color:#777;box-sizing:border-box;"></div>
<div class="b" style="left:587.9px;top:993.8px;width:114.4px;height:35.6px;border-radius:3.5px;background:#4d4d4d;box-shadow:0 0 1.5px rgba(0,0,0,.4),inset 0 1px 1.5px rgba(0,0,0,.3);"></div>
<span class="t" style="left:639.22px;top:1035.10px;font-size:10.40px;line-height:13px;color:#2c2c2c;transform:scaleX(1.0600);transform-origin:center center;font-weight:bold;">30</span>
<div class="b" style="left:709.6px;top:989px;width:124.6px;height:60px;border-radius:5px 5px 0 0;background:linear-gradient(#a2a2a2 0%,#8a8a8a 30%,#6c6c6c 72%,#585858 100%);border:1px solid #9c9c9c;border-top-color:#adadad;border-bottom:none;border-right-color:#777;box-sizing:border-box;"></div>
<div class="b" style="left:714.7px;top:993.8px;width:114.4px;height:35.6px;border-radius:3.5px;background:#666;box-shadow:0 0 1.5px rgba(0,0,0,.4),inset 0 1px 1.5px rgba(0,0,0,.3);"></div>
<span class="t" style="left:766.02px;top:1035.10px;font-size:10.40px;line-height:13px;color:#2c2c2c;transform:scaleX(1.0600);transform-origin:center center;font-weight:bold;">40</span>
<div class="b" style="left:836.4px;top:989px;width:124.6px;height:60px;border-radius:5px 5px 0 0;background:linear-gradient(#a2a2a2 0%,#8a8a8a 30%,#6c6c6c 72%,#585858 100%);border:1px solid #9c9c9c;border-top-color:#adadad;border-bottom:none;border-right-color:#777;box-sizing:border-box;"></div>
<div class="b" style="left:841.5px;top:993.8px;width:114.4px;height:35.6px;border-radius:3.5px;background:#808080;box-shadow:0 0 1.5px rgba(0,0,0,.4),inset 0 1px 1.5px rgba(0,0,0,.3);"></div>
<span class="t" style="left:892.82px;top:1035.10px;font-size:10.40px;line-height:13px;color:#2c2c2c;transform:scaleX(1.0600);transform-origin:center center;font-weight:bold;">50</span>
<div class="b" style="left:963.2px;top:989px;width:124.6px;height:60px;border-radius:5px 5px 0 0;background:linear-gradient(#a2a2a2 0%,#8a8a8a 30%,#6c6c6c 72%,#585858 100%);border:1px solid #9c9c9c;border-top-color:#adadad;border-bottom:none;border-right-color:#777;box-sizing:border-box;"></div>
<div class="b" style="left:968.3px;top:993.8px;width:114.4px;height:35.6px;border-radius:3.5px;background:#999;box-shadow:0 0 1.5px rgba(0,0,0,.4),inset 0 1px 1.5px rgba(0,0,0,.3);"></div>
<span class="t" style="left:1019.62px;top:1035.10px;font-size:10.40px;line-height:13px;color:#2c2c2c;transform:scaleX(1.0600);transform-origin:center center;font-weight:bold;">60</span>
<div class="b" style="left:1090.0px;top:989px;width:124.6px;height:60px;border-radius:5px 5px 0 0;background:linear-gradient(#a2a2a2 0%,#8a8a8a 30%,#6c6c6c 72%,#585858 100%);border:1px solid #9c9c9c;border-top-color:#adadad;border-bottom:none;border-right-color:#777;box-sizing:border-box;"></div>
<div class="b" style="left:1095.1px;top:993.8px;width:114.4px;height:35.6px;border-radius:3.5px;background:#b3b3b3;box-shadow:0 0 1.5px rgba(0,0,0,.4),inset 0 1px 1.5px rgba(0,0,0,.3);"></div>
<span class="t" style="left:1146.42px;top:1035.10px;font-size:10.40px;line-height:13px;color:#2c2c2c;transform:scaleX(1.0600);transform-origin:center center;font-weight:bold;">70</span>
<div class="b" style="left:1216.8px;top:989px;width:124.6px;height:60px;border-radius:5px 5px 0 0;background:linear-gradient(#a2a2a2 0%,#8a8a8a 30%,#6c6c6c 72%,#585858 100%);border:1px solid #9c9c9c;border-top-color:#adadad;border-bottom:none;border-right-color:#777;box-sizing:border-box;"></div>
<div class="b" style="left:1221.9px;top:993.8px;width:114.4px;height:35.6px;border-radius:3.5px;background:#ccc;box-shadow:0 0 1.5px rgba(0,0,0,.4),inset 0 1px 1.5px rgba(0,0,0,.3);"></div>
<span class="t" style="left:1273.22px;top:1035.10px;font-size:10.40px;line-height:13px;color:#2c2c2c;transform:scaleX(1.0600);transform-origin:center center;font-weight:bold;">80</span>
<div class="b" style="left:1343.6px;top:989px;width:124.6px;height:60px;border-radius:5px 5px 0 0;background:linear-gradient(#a2a2a2 0%,#8a8a8a 30%,#6c6c6c 72%,#585858 100%);border:1px solid #9c9c9c;border-top-color:#adadad;border-bottom:none;border-right-color:#777;box-sizing:border-box;"></div>
<div class="b" style="left:1348.7px;top:993.8px;width:114.4px;height:35.6px;border-radius:3.5px;background:#e6e6e6;box-shadow:0 0 1.5px rgba(0,0,0,.4),inset 0 1px 1.5px rgba(0,0,0,.3);"></div>
<span class="t" style="left:1400.02px;top:1035.10px;font-size:10.40px;line-height:13px;color:#2c2c2c;transform:scaleX(1.0600);transform-origin:center center;font-weight:bold;">90</span>
<div class="b" style="left:1470.4px;top:989px;width:124.6px;height:60px;border-radius:5px 5px 0 0;background:linear-gradient(#1c1c1c,#2a2a2a 60%,#383838);border:1px solid #2a2a2a;border-bottom:none;box-sizing:border-box;"></div>
<div class="b" style="left:1475.5px;top:993.8px;width:114.4px;height:35.6px;border-radius:3.5px;background:#fff;"></div>
<span class="t" style="left:1523.92px;top:1035.10px;font-size:10.40px;line-height:13px;color:#fff;transform:scaleX(1.0600);transform-origin:center center;font-weight:bold;">100</span>
<div class="b" style="left:1597.4px;top:989px;width:48.6px;height:18.5px;border-radius:4px 0 0 0;background:linear-gradient(#a0a0a0,#868686);border:1px solid #a6a6a6;border-left-color:rgba(255,255,255,.18);border-right-color:#3a3a3a;border-bottom-color:#444;box-sizing:border-box;"></div>
<div class="b" style="left:1597.4px;top:1007.5px;width:48.6px;height:41.5px;background:linear-gradient(#8c8c8c,#707070 60%,#666);border:1px solid #a6a6a6;border-left-color:rgba(255,255,255,.18);border-right-color:#3a3a3a;border-bottom-color:#444;box-sizing:border-box;"></div>
<div class="b" style="left:1613px;top:990px;width:17px;height:15px;border-radius:50%;background:linear-gradient(#686868,#858585);"></div>
<svg class="b" style="left:1616px;top:994px" width="11" height="6"><path d="M0.5 5.5h10L5.5 0.5z" fill="#333"/></svg>
<div class="b" style="left:1606.5px;top:1013.5px;width:30.5px;height:29.5px;border-radius:4px;border:2px solid #2a2a2a;box-sizing:border-box;background:linear-gradient(#9a9a9a 0%,#8a8a8a 55%,#777 56%,#808080 100%);"></div>
<div class="b" style="left:1615.30px;top:1022.30px;width:13.80px;height:13.00px;background:#000;"></div>
<div class="b" style="left:1647.0px;top:989px;width:45.8px;height:29.6px;background:linear-gradient(#a0a0a0 0%,#8a8a8a 40%,#747474 75%,#6a6a6a 100%);border:1px solid #a6a6a6;border-left-color:rgba(255,255,255,.18);border-right-color:#3a3a3a;border-bottom-color:#444;box-sizing:border-box;"></div>
<div class="b" style="left:1659.4px;top:993px;width:21px;height:21px;border-radius:50%;background:linear-gradient(#6a6a6a,#8c8c8c);"></div>
<div class="b" style="left:1692.8px;top:989px;width:45.2px;height:29.6px;background:linear-gradient(#a0a0a0 0%,#8a8a8a 40%,#747474 75%,#6a6a6a 100%);border:1px solid #a6a6a6;border-left-color:rgba(255,255,255,.18);border-right-color:#3a3a3a;border-bottom-color:#444;box-sizing:border-box;"></div>
<div class="b" style="left:1704.9px;top:993px;width:21px;height:21px;border-radius:50%;background:linear-gradient(#6a6a6a,#8c8c8c);"></div>
<div class="b" style="left:1738.0px;top:989px;width:45.0px;height:29.6px;background:linear-gradient(#a0a0a0 0%,#8a8a8a 40%,#747474 75%,#6a6a6a 100%);border:1px solid #a6a6a6;border-left-color:rgba(255,255,255,.18);border-right-color:#3a3a3a;border-bottom-color:#444;box-sizing:border-box;"></div>
<div class="b" style="left:1750.0px;top:993px;width:21px;height:21px;border-radius:50%;background:linear-gradient(#6a6a6a,#8c8c8c);"></div>
<div class="b" style="left:1783.0px;top:989px;width:45.2px;height:29.6px;background:linear-gradient(#a0a0a0 0%,#8a8a8a 40%,#747474 75%,#6a6a6a 100%);border:1px solid #a6a6a6;border-left-color:rgba(255,255,255,.18);border-right-color:#3a3a3a;border-bottom-color:#444;box-sizing:border-box;"></div>
<div class="b" style="left:1795.1px;top:993px;width:21px;height:21px;border-radius:50%;background:linear-gradient(#6a6a6a,#8c8c8c);"></div>
<div class="b" style="left:1828.2px;top:989px;width:45.0px;height:29.6px;background:linear-gradient(#a0a0a0 0%,#8a8a8a 40%,#747474 75%,#6a6a6a 100%);border:1px solid #a6a6a6;border-left-color:rgba(255,255,255,.18);border-right-color:#3a3a3a;border-bottom-color:#444;box-sizing:border-box;"></div>
<div class="b" style="left:1840.2px;top:993px;width:21px;height:21px;border-radius:50%;background:linear-gradient(#6a6a6a,#8c8c8c);"></div>
<div class="b" style="left:1873.2px;top:989px;width:48.0px;height:29.6px;background:linear-gradient(#a0a0a0 0%,#8a8a8a 40%,#747474 75%,#6a6a6a 100%);border:1px solid #a6a6a6;border-left-color:rgba(255,255,255,.18);border-right-color:#3a3a3a;border-bottom-color:#444;box-sizing:border-box;"></div>
<div class="b" style="left:1886.7px;top:993px;width:21px;height:21px;border-radius:50%;background:linear-gradient(#6a6a6a,#8c8c8c);"></div>
<div class="b" style="left:1665.50px;top:999.30px;width:8.60px;height:8.60px;background:#3a3a3a;"></div>
<svg class="b" style="left:1711px;top:998px" width="10" height="12"><path d="M1 0.5v11L9.5 6z" fill="#3a3a3a"/></svg>
<svg class="b" style="left:1753.5px;top:997.5px" width="14" height="12" fill="none" stroke="#3a3a3a" stroke-width="2"><path d="M4 1H1.2v10H4M10 1h2.8v10H10"/><path d="M4.6 6h1.6M7.8 6h1.6" stroke-width="1.8"/></svg>
<svg class="b" style="left:1798.6px;top:999.3px" width="15" height="9" fill="none" stroke="#3a3a3a" stroke-width="2.1"><path d="M7.5 4.5C6.2 2.6 5.2 1.6 3.9 1.6a2.7 2.9 0 0 0 0 5.8c1.3 0 2.300-1 3.600-2.900s2.300-2.900 3.600-2.900a2.700 2.900 0 0 1 0 5.800c-1.300 0-2.300-1-3.600-2.900z"/></svg>
<svg class="b" style="left:1843.5px;top:996.5px" width="15" height="15" viewBox="-7.5 -7.500 15 15" fill="none" stroke="#3a3a3a" stroke-width="2.5"><path d="M-4.700 -1.500A5 5 0 0 1 3.800 -3.200"/><path d="M4.700 1.500A5 5 0 0 1 -3.800 3.200"/><path d="M5.600 -5.800v3.700h-3.700z" fill="#3a3a3a" stroke="none"/><path d="M-5.600 5.800v-3.700h3.700z" fill="#3a3a3a" stroke="none"/></svg>
<div class="b" style="left:1647px;top:1018.6px;width:136px;height:30.4px;background:linear-gradient(#a6a6a6 0%,#8e8e8e 50%,#787878 100%);border:1px solid #a6a6a6;border-left-color:rgba(255,255,255,.18);border-right-color:#3a3a3a;border-bottom-color:#444;box-sizing:border-box;"></div>
<div class="b" style="left:1783px;top:1018.6px;width:136px;height:30.4px;background:linear-gradient(#a6a6a6 0%,#8e8e8e 50%,#787878 100%);border:1px solid #a6a6a6;border-left-color:rgba(255,255,255,.18);border-right-color:#3a3a3a;border-bottom-color:#444;box-sizing:border-box;"></div>
<div class="b" style="left:1668.5px;top:1025px;width:19px;height:19px;border-radius:50%;background:linear-gradient(#6a6a6a,#8a8a8a);"></div>
<div class="b" style="left:1882.5px;top:1025px;width:19px;height:19px;border-radius:50%;background:linear-gradient(#6a6a6a,#8a8a8a);"></div>
<svg class="b" style="left:1672.5px;top:1030.4px" width="11" height="10" fill="none" stroke="#3a3a3a" stroke-width="1.9"><path d="M5 0.800L1.500 5l3.500 4.200M9.500 0.800L6 5l3.500 4.200"/></svg>
<svg class="b" style="left:1885.6px;top:1030.4px" width="11" height="10" fill="none" stroke="#3a3a3a" stroke-width="1.9"><path d="M1.500 0.800L5 5l-3.500 4.200M6 0.800L9.500 5l-3.500 4.200"/></svg>
<div class="b" style="left:201.00px;top:1049.00px;width:1708.00px;height:2.00px;background:#2c2c2c;"></div>
<span class="t" style="left:1704.40px;top:1021.35px;font-size:21.80px;line-height:27px;color:#3e3e3e;transform:scaleX(1.0419);transform-origin:left center;-webkit-text-stroke:0.6px #3e3e3e;">Back</span>
<span class="t" style="left:1811.40px;top:1021.35px;font-size:21.80px;line-height:27px;color:#3e3e3e;transform:scaleX(1.1510);transform-origin:left center;-webkit-text-stroke:0.6px #3e3e3e;">Next</span>
</div></body></html>
